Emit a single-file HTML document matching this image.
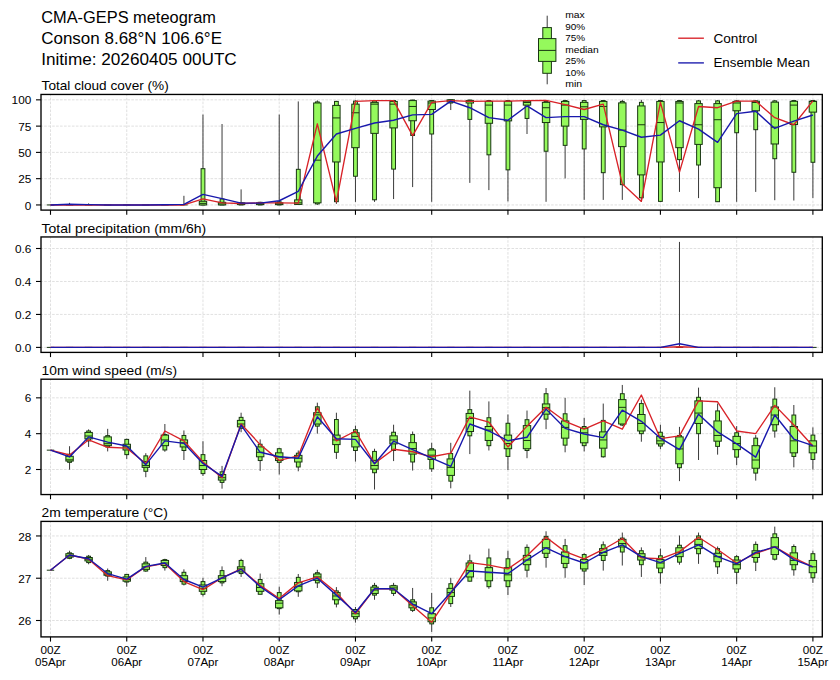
<!DOCTYPE html>
<html><head><meta charset="utf-8"><style>html,body{margin:0;padding:0;background:#fff;}svg{display:block;}</style></head><body><svg width="840" height="680" viewBox="0 0 840 680">
<rect width="840" height="680" fill="#ffffff"/>
<g font-family='"Liberation Sans", sans-serif' fill="#000">
<text x="41.20" y="22.90" font-size="16.22" text-anchor="start" textLength="174.79" lengthAdjust="spacingAndGlyphs">CMA-GEPS meteogram</text>
<text x="41.20" y="43.70" font-size="16.22" text-anchor="start" textLength="180.78" lengthAdjust="spacingAndGlyphs">Conson 8.68°N 106.6°E</text>
<text x="41.20" y="64.50" font-size="16.22" text-anchor="start" textLength="195.58" lengthAdjust="spacingAndGlyphs">Initime: 20260405 00UTC</text>
</g>
<g stroke="#d8d8d8" stroke-width="0.8" stroke-dasharray="2.6,1.36" stroke-dashoffset="0.75"><line x1="41.0" x2="822.3" y1="204.95" y2="204.95"/><line x1="41.0" x2="822.3" y1="178.67" y2="178.67"/><line x1="41.0" x2="822.3" y1="152.39" y2="152.39"/><line x1="41.0" x2="822.3" y1="126.12" y2="126.12"/><line x1="41.0" x2="822.3" y1="99.84" y2="99.84"/><line x1="50.50" x2="50.50" y1="94.45" y2="210.1"/><line x1="126.74" x2="126.74" y1="94.45" y2="210.1"/><line x1="202.98" x2="202.98" y1="94.45" y2="210.1"/><line x1="279.22" x2="279.22" y1="94.45" y2="210.1"/><line x1="355.46" x2="355.46" y1="94.45" y2="210.1"/><line x1="431.70" x2="431.70" y1="94.45" y2="210.1"/><line x1="507.94" x2="507.94" y1="94.45" y2="210.1"/><line x1="584.18" x2="584.18" y1="94.45" y2="210.1"/><line x1="660.42" x2="660.42" y1="94.45" y2="210.1"/><line x1="736.66" x2="736.66" y1="94.45" y2="210.1"/><line x1="812.90" x2="812.90" y1="94.45" y2="210.1"/></g>
<g><line x1="50.50" x2="50.50" y1="204.95" y2="204.95" stroke="#3a3a3a" stroke-width="1"/><rect x="48.60" y="204.95" width="3.8" height="0.00" fill="#95f95c" stroke="#183512" stroke-width="1"/><rect x="46.80" y="204.95" width="7.4" height="0.00" fill="#95f95c" stroke="#183512" stroke-width="1"/><line x1="46.80" x2="54.20" y1="204.95" y2="204.95" stroke="#183512" stroke-width="1"/><line x1="69.56" x2="69.56" y1="202.85" y2="204.95" stroke="#3a3a3a" stroke-width="1"/><rect x="67.66" y="204.95" width="3.8" height="0.00" fill="#95f95c" stroke="#183512" stroke-width="1"/><rect x="65.86" y="204.95" width="7.4" height="0.00" fill="#95f95c" stroke="#183512" stroke-width="1"/><line x1="65.86" x2="73.26" y1="204.95" y2="204.95" stroke="#183512" stroke-width="1"/><line x1="88.62" x2="88.62" y1="203.37" y2="204.95" stroke="#3a3a3a" stroke-width="1"/><rect x="86.72" y="204.95" width="3.8" height="0.00" fill="#95f95c" stroke="#183512" stroke-width="1"/><rect x="84.92" y="204.95" width="7.4" height="0.00" fill="#95f95c" stroke="#183512" stroke-width="1"/><line x1="84.92" x2="92.32" y1="204.95" y2="204.95" stroke="#183512" stroke-width="1"/><line x1="107.68" x2="107.68" y1="204.95" y2="204.95" stroke="#3a3a3a" stroke-width="1"/><rect x="105.78" y="204.95" width="3.8" height="0.00" fill="#95f95c" stroke="#183512" stroke-width="1"/><rect x="103.98" y="204.95" width="7.4" height="0.00" fill="#95f95c" stroke="#183512" stroke-width="1"/><line x1="103.98" x2="111.38" y1="204.95" y2="204.95" stroke="#183512" stroke-width="1"/><line x1="126.74" x2="126.74" y1="204.95" y2="204.95" stroke="#3a3a3a" stroke-width="1"/><rect x="124.84" y="204.95" width="3.8" height="0.00" fill="#95f95c" stroke="#183512" stroke-width="1"/><rect x="123.04" y="204.95" width="7.4" height="0.00" fill="#95f95c" stroke="#183512" stroke-width="1"/><line x1="123.04" x2="130.44" y1="204.95" y2="204.95" stroke="#183512" stroke-width="1"/><line x1="145.80" x2="145.80" y1="204.95" y2="204.95" stroke="#3a3a3a" stroke-width="1"/><rect x="143.90" y="204.95" width="3.8" height="0.00" fill="#95f95c" stroke="#183512" stroke-width="1"/><rect x="142.10" y="204.95" width="7.4" height="0.00" fill="#95f95c" stroke="#183512" stroke-width="1"/><line x1="142.10" x2="149.50" y1="204.95" y2="204.95" stroke="#183512" stroke-width="1"/><line x1="164.86" x2="164.86" y1="204.95" y2="204.95" stroke="#3a3a3a" stroke-width="1"/><rect x="162.96" y="204.95" width="3.8" height="0.00" fill="#95f95c" stroke="#183512" stroke-width="1"/><rect x="161.16" y="204.95" width="7.4" height="0.00" fill="#95f95c" stroke="#183512" stroke-width="1"/><line x1="161.16" x2="168.56" y1="204.95" y2="204.95" stroke="#183512" stroke-width="1"/><line x1="183.92" x2="183.92" y1="195.81" y2="204.95" stroke="#3a3a3a" stroke-width="1"/><rect x="182.02" y="204.95" width="3.8" height="0.00" fill="#95f95c" stroke="#183512" stroke-width="1"/><rect x="180.22" y="204.95" width="7.4" height="0.00" fill="#95f95c" stroke="#183512" stroke-width="1"/><line x1="180.22" x2="187.62" y1="204.95" y2="204.95" stroke="#183512" stroke-width="1"/><line x1="202.98" x2="202.98" y1="114.56" y2="204.95" stroke="#3a3a3a" stroke-width="1"/><rect x="201.08" y="168.69" width="3.8" height="36.26" fill="#95f95c" stroke="#183512" stroke-width="1"/><rect x="199.28" y="201.27" width="7.4" height="3.68" fill="#95f95c" stroke="#183512" stroke-width="1"/><line x1="199.28" x2="206.68" y1="203.37" y2="203.37" stroke="#183512" stroke-width="1"/><line x1="222.04" x2="222.04" y1="124.02" y2="204.95" stroke="#3a3a3a" stroke-width="1"/><rect x="220.14" y="198.96" width="3.8" height="5.99" fill="#95f95c" stroke="#183512" stroke-width="1"/><rect x="218.34" y="202.32" width="7.4" height="2.63" fill="#95f95c" stroke="#183512" stroke-width="1"/><line x1="218.34" x2="225.74" y1="203.90" y2="203.90" stroke="#183512" stroke-width="1"/><line x1="241.10" x2="241.10" y1="189.39" y2="204.95" stroke="#3a3a3a" stroke-width="1"/><rect x="239.20" y="202.85" width="3.8" height="2.10" fill="#95f95c" stroke="#183512" stroke-width="1"/><rect x="237.40" y="202.85" width="7.4" height="1.79" fill="#95f95c" stroke="#183512" stroke-width="1"/><line x1="237.40" x2="244.80" y1="203.90" y2="203.90" stroke="#183512" stroke-width="1"/><line x1="260.16" x2="260.16" y1="201.80" y2="204.95" stroke="#3a3a3a" stroke-width="1"/><rect x="258.26" y="202.32" width="3.8" height="2.63" fill="#95f95c" stroke="#183512" stroke-width="1"/><rect x="256.46" y="202.85" width="7.4" height="1.79" fill="#95f95c" stroke="#183512" stroke-width="1"/><line x1="256.46" x2="263.86" y1="203.90" y2="203.90" stroke="#183512" stroke-width="1"/><line x1="279.22" x2="279.22" y1="114.56" y2="204.95" stroke="#3a3a3a" stroke-width="1"/><rect x="277.32" y="201.80" width="3.8" height="3.15" fill="#95f95c" stroke="#183512" stroke-width="1"/><rect x="275.52" y="202.85" width="7.4" height="1.79" fill="#95f95c" stroke="#183512" stroke-width="1"/><line x1="275.52" x2="282.92" y1="203.90" y2="203.90" stroke="#183512" stroke-width="1"/><line x1="298.28" x2="298.28" y1="101.42" y2="204.95" stroke="#3a3a3a" stroke-width="1"/><rect x="296.38" y="169.32" width="3.8" height="35.11" fill="#95f95c" stroke="#183512" stroke-width="1"/><rect x="294.58" y="199.90" width="7.4" height="4.52" fill="#95f95c" stroke="#183512" stroke-width="1"/><line x1="294.58" x2="301.98" y1="202.85" y2="202.85" stroke="#183512" stroke-width="1"/><line x1="317.34" x2="317.34" y1="100.37" y2="204.95" stroke="#3a3a3a" stroke-width="1"/><rect x="315.44" y="101.94" width="3.8" height="101.96" fill="#95f95c" stroke="#183512" stroke-width="1"/><rect x="313.64" y="102.99" width="7.4" height="99.85" fill="#95f95c" stroke="#183512" stroke-width="1"/><line x1="313.64" x2="321.04" y1="160.17" y2="160.17" stroke="#183512" stroke-width="1"/><line x1="336.40" x2="336.40" y1="100.89" y2="203.90" stroke="#3a3a3a" stroke-width="1"/><rect x="334.50" y="101.42" width="3.8" height="100.27" fill="#95f95c" stroke="#183512" stroke-width="1"/><rect x="332.70" y="105.41" width="7.4" height="56.55" fill="#95f95c" stroke="#183512" stroke-width="1"/><line x1="332.70" x2="340.10" y1="117.92" y2="117.92" stroke="#183512" stroke-width="1"/><line x1="355.46" x2="355.46" y1="100.37" y2="201.90" stroke="#3a3a3a" stroke-width="1"/><rect x="353.56" y="101.10" width="3.8" height="75.15" fill="#95f95c" stroke="#183512" stroke-width="1"/><rect x="351.76" y="104.15" width="7.4" height="43.52" fill="#95f95c" stroke="#183512" stroke-width="1"/><line x1="351.76" x2="359.16" y1="112.77" y2="112.77" stroke="#183512" stroke-width="1"/><line x1="374.52" x2="374.52" y1="100.37" y2="201.90" stroke="#3a3a3a" stroke-width="1"/><rect x="372.62" y="100.89" width="3.8" height="98.91" fill="#95f95c" stroke="#183512" stroke-width="1"/><rect x="370.82" y="102.36" width="7.4" height="31.01" fill="#95f95c" stroke="#183512" stroke-width="1"/><line x1="370.82" x2="378.22" y1="104.15" y2="104.15" stroke="#183512" stroke-width="1"/><line x1="393.58" x2="393.58" y1="100.37" y2="199.06" stroke="#3a3a3a" stroke-width="1"/><rect x="391.68" y="100.58" width="3.8" height="68.53" fill="#95f95c" stroke="#183512" stroke-width="1"/><rect x="389.88" y="101.42" width="7.4" height="26.49" fill="#95f95c" stroke="#183512" stroke-width="1"/><line x1="389.88" x2="397.28" y1="104.15" y2="104.15" stroke="#183512" stroke-width="1"/><line x1="412.64" x2="412.64" y1="99.84" y2="187.08" stroke="#3a3a3a" stroke-width="1"/><rect x="410.74" y="100.05" width="3.8" height="35.42" fill="#95f95c" stroke="#183512" stroke-width="1"/><rect x="408.94" y="100.58" width="7.4" height="20.18" fill="#95f95c" stroke="#183512" stroke-width="1"/><line x1="408.94" x2="416.34" y1="106.46" y2="106.46" stroke="#183512" stroke-width="1"/><line x1="431.70" x2="431.70" y1="100.37" y2="201.80" stroke="#3a3a3a" stroke-width="1"/><rect x="429.80" y="100.58" width="3.8" height="33.42" fill="#95f95c" stroke="#183512" stroke-width="1"/><rect x="428.00" y="101.10" width="7.4" height="8.41" fill="#95f95c" stroke="#183512" stroke-width="1"/><line x1="428.00" x2="435.40" y1="102.99" y2="102.99" stroke="#183512" stroke-width="1"/><line x1="450.76" x2="450.76" y1="99.84" y2="110.04" stroke="#3a3a3a" stroke-width="1"/><rect x="448.86" y="99.84" width="3.8" height="3.15" fill="#95f95c" stroke="#183512" stroke-width="1"/><rect x="447.06" y="99.84" width="7.4" height="2.10" fill="#95f95c" stroke="#183512" stroke-width="1"/><line x1="447.06" x2="454.46" y1="100.37" y2="100.37" stroke="#183512" stroke-width="1"/><line x1="469.82" x2="469.82" y1="99.84" y2="182.88" stroke="#3a3a3a" stroke-width="1"/><rect x="467.92" y="100.05" width="3.8" height="19.34" fill="#95f95c" stroke="#183512" stroke-width="1"/><rect x="466.12" y="100.58" width="7.4" height="2.42" fill="#95f95c" stroke="#183512" stroke-width="1"/><line x1="466.12" x2="473.52" y1="101.42" y2="101.42" stroke="#183512" stroke-width="1"/><line x1="488.88" x2="488.88" y1="100.05" y2="190.13" stroke="#3a3a3a" stroke-width="1"/><rect x="486.98" y="100.58" width="3.8" height="54.24" fill="#95f95c" stroke="#183512" stroke-width="1"/><rect x="485.18" y="101.42" width="7.4" height="21.86" fill="#95f95c" stroke="#183512" stroke-width="1"/><line x1="485.18" x2="492.58" y1="105.10" y2="105.10" stroke="#183512" stroke-width="1"/><line x1="507.94" x2="507.94" y1="100.05" y2="201.38" stroke="#3a3a3a" stroke-width="1"/><rect x="506.04" y="100.58" width="3.8" height="69.27" fill="#95f95c" stroke="#183512" stroke-width="1"/><rect x="504.24" y="101.42" width="7.4" height="19.45" fill="#95f95c" stroke="#183512" stroke-width="1"/><line x1="504.24" x2="511.64" y1="105.10" y2="105.10" stroke="#183512" stroke-width="1"/><line x1="527.00" x2="527.00" y1="100.05" y2="134.00" stroke="#3a3a3a" stroke-width="1"/><rect x="525.10" y="100.58" width="3.8" height="17.87" fill="#95f95c" stroke="#183512" stroke-width="1"/><rect x="523.30" y="101.10" width="7.4" height="3.99" fill="#95f95c" stroke="#183512" stroke-width="1"/><line x1="523.30" x2="530.70" y1="102.47" y2="102.47" stroke="#183512" stroke-width="1"/><line x1="546.06" x2="546.06" y1="100.37" y2="201.80" stroke="#3a3a3a" stroke-width="1"/><rect x="544.16" y="101.42" width="3.8" height="49.82" fill="#95f95c" stroke="#183512" stroke-width="1"/><rect x="542.36" y="102.36" width="7.4" height="20.18" fill="#95f95c" stroke="#183512" stroke-width="1"/><line x1="542.36" x2="549.76" y1="107.72" y2="107.72" stroke="#183512" stroke-width="1"/><line x1="565.12" x2="565.12" y1="99.84" y2="178.46" stroke="#3a3a3a" stroke-width="1"/><rect x="563.22" y="100.58" width="3.8" height="44.78" fill="#95f95c" stroke="#183512" stroke-width="1"/><rect x="561.42" y="101.42" width="7.4" height="24.70" fill="#95f95c" stroke="#183512" stroke-width="1"/><line x1="561.42" x2="568.82" y1="105.10" y2="105.10" stroke="#183512" stroke-width="1"/><line x1="584.18" x2="584.18" y1="100.05" y2="199.90" stroke="#3a3a3a" stroke-width="1"/><rect x="582.28" y="100.58" width="3.8" height="48.35" fill="#95f95c" stroke="#183512" stroke-width="1"/><rect x="580.48" y="102.36" width="7.4" height="17.03" fill="#95f95c" stroke="#183512" stroke-width="1"/><line x1="580.48" x2="587.88" y1="106.78" y2="106.78" stroke="#183512" stroke-width="1"/><line x1="603.24" x2="603.24" y1="100.05" y2="199.90" stroke="#3a3a3a" stroke-width="1"/><rect x="601.34" y="100.58" width="3.8" height="72.11" fill="#95f95c" stroke="#183512" stroke-width="1"/><rect x="599.54" y="101.42" width="7.4" height="25.44" fill="#95f95c" stroke="#183512" stroke-width="1"/><line x1="599.54" x2="606.94" y1="106.46" y2="106.46" stroke="#183512" stroke-width="1"/><line x1="622.30" x2="622.30" y1="99.84" y2="199.90" stroke="#3a3a3a" stroke-width="1"/><rect x="620.40" y="101.42" width="3.8" height="83.25" fill="#95f95c" stroke="#183512" stroke-width="1"/><rect x="618.60" y="102.89" width="7.4" height="43.73" fill="#95f95c" stroke="#183512" stroke-width="1"/><line x1="618.60" x2="626.00" y1="130.11" y2="130.11" stroke="#183512" stroke-width="1"/><line x1="641.36" x2="641.36" y1="99.84" y2="201.80" stroke="#3a3a3a" stroke-width="1"/><rect x="639.46" y="102.36" width="3.8" height="95.44" fill="#95f95c" stroke="#183512" stroke-width="1"/><rect x="637.66" y="105.94" width="7.4" height="68.95" fill="#95f95c" stroke="#183512" stroke-width="1"/><line x1="637.66" x2="645.06" y1="124.75" y2="124.75" stroke="#183512" stroke-width="1"/><line x1="660.42" x2="660.42" y1="100.05" y2="201.80" stroke="#3a3a3a" stroke-width="1"/><rect x="658.52" y="100.58" width="3.8" height="100.80" fill="#95f95c" stroke="#183512" stroke-width="1"/><rect x="656.72" y="101.42" width="7.4" height="60.54" fill="#95f95c" stroke="#183512" stroke-width="1"/><line x1="656.72" x2="664.12" y1="122.54" y2="122.54" stroke="#183512" stroke-width="1"/><line x1="679.48" x2="679.48" y1="100.05" y2="191.92" stroke="#3a3a3a" stroke-width="1"/><rect x="677.58" y="100.58" width="3.8" height="59.07" fill="#95f95c" stroke="#183512" stroke-width="1"/><rect x="675.78" y="101.42" width="7.4" height="46.25" fill="#95f95c" stroke="#183512" stroke-width="1"/><line x1="675.78" x2="683.18" y1="102.99" y2="102.99" stroke="#183512" stroke-width="1"/><line x1="698.54" x2="698.54" y1="100.05" y2="198.12" stroke="#3a3a3a" stroke-width="1"/><rect x="696.64" y="100.89" width="3.8" height="64.12" fill="#95f95c" stroke="#183512" stroke-width="1"/><rect x="694.84" y="103.62" width="7.4" height="40.78" fill="#95f95c" stroke="#183512" stroke-width="1"/><line x1="694.84" x2="702.24" y1="124.75" y2="124.75" stroke="#183512" stroke-width="1"/><line x1="717.60" x2="717.60" y1="100.05" y2="201.80" stroke="#3a3a3a" stroke-width="1"/><rect x="715.70" y="100.89" width="3.8" height="100.80" fill="#95f95c" stroke="#183512" stroke-width="1"/><rect x="713.90" y="103.62" width="7.4" height="84.09" fill="#95f95c" stroke="#183512" stroke-width="1"/><line x1="713.90" x2="721.30" y1="119.71" y2="119.71" stroke="#183512" stroke-width="1"/><line x1="736.66" x2="736.66" y1="100.05" y2="201.80" stroke="#3a3a3a" stroke-width="1"/><rect x="734.76" y="100.89" width="3.8" height="31.85" fill="#95f95c" stroke="#183512" stroke-width="1"/><rect x="732.96" y="101.42" width="7.4" height="9.35" fill="#95f95c" stroke="#183512" stroke-width="1"/><line x1="732.96" x2="740.36" y1="102.99" y2="102.99" stroke="#183512" stroke-width="1"/><line x1="755.72" x2="755.72" y1="100.05" y2="191.92" stroke="#3a3a3a" stroke-width="1"/><rect x="753.82" y="100.89" width="3.8" height="28.80" fill="#95f95c" stroke="#183512" stroke-width="1"/><rect x="752.02" y="101.21" width="7.4" height="9.57" fill="#95f95c" stroke="#183512" stroke-width="1"/><line x1="752.02" x2="759.42" y1="102.47" y2="102.47" stroke="#183512" stroke-width="1"/><line x1="774.78" x2="774.78" y1="100.05" y2="200.22" stroke="#3a3a3a" stroke-width="1"/><rect x="772.88" y="100.89" width="3.8" height="57.81" fill="#95f95c" stroke="#183512" stroke-width="1"/><rect x="771.08" y="102.15" width="7.4" height="41.83" fill="#95f95c" stroke="#183512" stroke-width="1"/><line x1="771.08" x2="778.48" y1="127.17" y2="127.17" stroke="#183512" stroke-width="1"/><line x1="793.84" x2="793.84" y1="100.05" y2="200.54" stroke="#3a3a3a" stroke-width="1"/><rect x="791.94" y="100.58" width="3.8" height="71.69" fill="#95f95c" stroke="#183512" stroke-width="1"/><rect x="790.14" y="101.31" width="7.4" height="23.23" fill="#95f95c" stroke="#183512" stroke-width="1"/><line x1="790.14" x2="797.54" y1="105.10" y2="105.10" stroke="#183512" stroke-width="1"/><line x1="812.90" x2="812.90" y1="100.05" y2="197.91" stroke="#3a3a3a" stroke-width="1"/><rect x="811.00" y="100.58" width="3.8" height="61.70" fill="#95f95c" stroke="#183512" stroke-width="1"/><rect x="809.20" y="101.21" width="7.4" height="10.93" fill="#95f95c" stroke="#183512" stroke-width="1"/><line x1="809.20" x2="816.60" y1="101.52" y2="101.52" stroke="#183512" stroke-width="1"/></g>
<polyline points="50.50,204.95 69.56,204.95 88.62,204.95 107.68,204.95 126.74,204.95 145.80,204.95 164.86,204.95 183.92,204.95 202.98,198.96 222.04,202.85 241.10,203.48 260.16,202.85 279.22,202.85 298.28,203.16 317.34,123.81 336.40,201.80 355.46,101.42 374.52,100.58 393.58,100.58 412.64,135.58 431.70,102.36 450.76,100.58 469.82,101.42 488.88,101.10 507.94,101.10 527.00,100.58 546.06,100.37 565.12,104.68 584.18,109.51 603.24,104.15 622.30,183.82 641.36,201.38 660.42,102.36 679.48,172.16 698.54,106.46 717.60,107.72 736.66,101.10 755.72,101.10 774.78,117.71 793.84,124.75 812.90,100.89" fill="none" stroke="#d82228" stroke-width="1.35" stroke-linejoin="round"/>
<polyline points="50.50,204.95 69.56,204.32 88.62,204.63 107.68,204.95 126.74,204.95 145.80,204.95 164.86,204.74 183.92,204.42 202.98,194.44 222.04,198.64 241.10,203.16 260.16,203.16 279.22,200.75 298.28,191.29 317.34,156.07 336.40,134.00 355.46,128.32 374.52,122.96 393.58,120.23 412.64,114.87 431.70,114.35 450.76,101.10 469.82,107.72 488.88,117.60 507.94,120.23 527.00,105.94 546.06,117.60 565.12,116.66 584.18,116.66 603.24,124.75 622.30,130.11 641.36,137.26 660.42,135.16 679.48,120.76 698.54,129.17 717.60,142.30 736.66,113.61 755.72,111.30 774.78,128.43 793.84,121.18 812.90,114.98" fill="none" stroke="#1818ac" stroke-width="1.4" stroke-linejoin="round"/>
<rect x="41.0" y="94.45" width="781.30" height="115.65" fill="none" stroke="#000" stroke-width="1.35"/>
<g stroke="#000" stroke-width="1.1"><line x1="36.0" x2="41.0" y1="204.95" y2="204.95"/><line x1="36.0" x2="41.0" y1="178.67" y2="178.67"/><line x1="36.0" x2="41.0" y1="152.39" y2="152.39"/><line x1="36.0" x2="41.0" y1="126.12" y2="126.12"/><line x1="36.0" x2="41.0" y1="99.84" y2="99.84"/><line x1="50.50" x2="50.50" y1="210.1" y2="214.79999999999998"/><line x1="126.74" x2="126.74" y1="210.1" y2="214.79999999999998"/><line x1="202.98" x2="202.98" y1="210.1" y2="214.79999999999998"/><line x1="279.22" x2="279.22" y1="210.1" y2="214.79999999999998"/><line x1="355.46" x2="355.46" y1="210.1" y2="214.79999999999998"/><line x1="431.70" x2="431.70" y1="210.1" y2="214.79999999999998"/><line x1="507.94" x2="507.94" y1="210.1" y2="214.79999999999998"/><line x1="584.18" x2="584.18" y1="210.1" y2="214.79999999999998"/><line x1="660.42" x2="660.42" y1="210.1" y2="214.79999999999998"/><line x1="736.66" x2="736.66" y1="210.1" y2="214.79999999999998"/><line x1="812.90" x2="812.90" y1="210.1" y2="214.79999999999998"/></g>
<g font-family='"Liberation Sans", sans-serif' fill="#000"><text x="31.30" y="209.55" font-size="10.92" text-anchor="end" textLength="6.55" lengthAdjust="spacingAndGlyphs">0</text><text x="31.30" y="183.27" font-size="10.92" text-anchor="end" textLength="13.11" lengthAdjust="spacingAndGlyphs">25</text><text x="31.30" y="156.99" font-size="10.92" text-anchor="end" textLength="13.11" lengthAdjust="spacingAndGlyphs">50</text><text x="31.30" y="130.72" font-size="10.92" text-anchor="end" textLength="13.11" lengthAdjust="spacingAndGlyphs">75</text><text x="31.30" y="104.44" font-size="10.92" text-anchor="end" textLength="19.66" lengthAdjust="spacingAndGlyphs">100</text></g>
<text x="41.60" y="90.10" font-size="12.83" text-anchor="start" textLength="127.14" lengthAdjust="spacingAndGlyphs" font-family='"Liberation Sans", sans-serif' fill="#000">Total cloud cover (%)</text>
<g stroke="#d8d8d8" stroke-width="0.8" stroke-dasharray="2.6,1.36" stroke-dashoffset="0.75"><line x1="41.0" x2="822.3" y1="347.40" y2="347.40"/><line x1="41.0" x2="822.3" y1="314.43" y2="314.43"/><line x1="41.0" x2="822.3" y1="281.47" y2="281.47"/><line x1="41.0" x2="822.3" y1="248.50" y2="248.50"/><line x1="50.50" x2="50.50" y1="236.95" y2="352.4"/><line x1="126.74" x2="126.74" y1="236.95" y2="352.4"/><line x1="202.98" x2="202.98" y1="236.95" y2="352.4"/><line x1="279.22" x2="279.22" y1="236.95" y2="352.4"/><line x1="355.46" x2="355.46" y1="236.95" y2="352.4"/><line x1="431.70" x2="431.70" y1="236.95" y2="352.4"/><line x1="507.94" x2="507.94" y1="236.95" y2="352.4"/><line x1="584.18" x2="584.18" y1="236.95" y2="352.4"/><line x1="660.42" x2="660.42" y1="236.95" y2="352.4"/><line x1="736.66" x2="736.66" y1="236.95" y2="352.4"/><line x1="812.90" x2="812.90" y1="236.95" y2="352.4"/></g>
<g><line x1="50.50" x2="50.50" y1="347.40" y2="347.40" stroke="#3a3a3a" stroke-width="1"/><rect x="48.60" y="347.40" width="3.8" height="0.00" fill="#95f95c" stroke="#183512" stroke-width="1"/><rect x="46.80" y="347.40" width="7.4" height="0.00" fill="#95f95c" stroke="#183512" stroke-width="1"/><line x1="46.80" x2="54.20" y1="347.40" y2="347.40" stroke="#183512" stroke-width="1"/><line x1="69.56" x2="69.56" y1="347.40" y2="347.40" stroke="#3a3a3a" stroke-width="1"/><rect x="67.66" y="347.40" width="3.8" height="0.00" fill="#95f95c" stroke="#183512" stroke-width="1"/><rect x="65.86" y="347.40" width="7.4" height="0.00" fill="#95f95c" stroke="#183512" stroke-width="1"/><line x1="65.86" x2="73.26" y1="347.40" y2="347.40" stroke="#183512" stroke-width="1"/><line x1="88.62" x2="88.62" y1="347.40" y2="347.40" stroke="#3a3a3a" stroke-width="1"/><rect x="86.72" y="347.40" width="3.8" height="0.00" fill="#95f95c" stroke="#183512" stroke-width="1"/><rect x="84.92" y="347.40" width="7.4" height="0.00" fill="#95f95c" stroke="#183512" stroke-width="1"/><line x1="84.92" x2="92.32" y1="347.40" y2="347.40" stroke="#183512" stroke-width="1"/><line x1="107.68" x2="107.68" y1="347.40" y2="347.40" stroke="#3a3a3a" stroke-width="1"/><rect x="105.78" y="347.40" width="3.8" height="0.00" fill="#95f95c" stroke="#183512" stroke-width="1"/><rect x="103.98" y="347.40" width="7.4" height="0.00" fill="#95f95c" stroke="#183512" stroke-width="1"/><line x1="103.98" x2="111.38" y1="347.40" y2="347.40" stroke="#183512" stroke-width="1"/><line x1="126.74" x2="126.74" y1="347.40" y2="347.40" stroke="#3a3a3a" stroke-width="1"/><rect x="124.84" y="347.40" width="3.8" height="0.00" fill="#95f95c" stroke="#183512" stroke-width="1"/><rect x="123.04" y="347.40" width="7.4" height="0.00" fill="#95f95c" stroke="#183512" stroke-width="1"/><line x1="123.04" x2="130.44" y1="347.40" y2="347.40" stroke="#183512" stroke-width="1"/><line x1="145.80" x2="145.80" y1="347.40" y2="347.40" stroke="#3a3a3a" stroke-width="1"/><rect x="143.90" y="347.40" width="3.8" height="0.00" fill="#95f95c" stroke="#183512" stroke-width="1"/><rect x="142.10" y="347.40" width="7.4" height="0.00" fill="#95f95c" stroke="#183512" stroke-width="1"/><line x1="142.10" x2="149.50" y1="347.40" y2="347.40" stroke="#183512" stroke-width="1"/><line x1="164.86" x2="164.86" y1="347.40" y2="347.40" stroke="#3a3a3a" stroke-width="1"/><rect x="162.96" y="347.40" width="3.8" height="0.00" fill="#95f95c" stroke="#183512" stroke-width="1"/><rect x="161.16" y="347.40" width="7.4" height="0.00" fill="#95f95c" stroke="#183512" stroke-width="1"/><line x1="161.16" x2="168.56" y1="347.40" y2="347.40" stroke="#183512" stroke-width="1"/><line x1="183.92" x2="183.92" y1="347.40" y2="347.40" stroke="#3a3a3a" stroke-width="1"/><rect x="182.02" y="347.40" width="3.8" height="0.00" fill="#95f95c" stroke="#183512" stroke-width="1"/><rect x="180.22" y="347.40" width="7.4" height="0.00" fill="#95f95c" stroke="#183512" stroke-width="1"/><line x1="180.22" x2="187.62" y1="347.40" y2="347.40" stroke="#183512" stroke-width="1"/><line x1="202.98" x2="202.98" y1="347.40" y2="347.40" stroke="#3a3a3a" stroke-width="1"/><rect x="201.08" y="347.40" width="3.8" height="0.00" fill="#95f95c" stroke="#183512" stroke-width="1"/><rect x="199.28" y="347.40" width="7.4" height="0.00" fill="#95f95c" stroke="#183512" stroke-width="1"/><line x1="199.28" x2="206.68" y1="347.40" y2="347.40" stroke="#183512" stroke-width="1"/><line x1="222.04" x2="222.04" y1="347.40" y2="347.40" stroke="#3a3a3a" stroke-width="1"/><rect x="220.14" y="347.40" width="3.8" height="0.00" fill="#95f95c" stroke="#183512" stroke-width="1"/><rect x="218.34" y="347.40" width="7.4" height="0.00" fill="#95f95c" stroke="#183512" stroke-width="1"/><line x1="218.34" x2="225.74" y1="347.40" y2="347.40" stroke="#183512" stroke-width="1"/><line x1="241.10" x2="241.10" y1="347.40" y2="347.40" stroke="#3a3a3a" stroke-width="1"/><rect x="239.20" y="347.40" width="3.8" height="0.00" fill="#95f95c" stroke="#183512" stroke-width="1"/><rect x="237.40" y="347.40" width="7.4" height="0.00" fill="#95f95c" stroke="#183512" stroke-width="1"/><line x1="237.40" x2="244.80" y1="347.40" y2="347.40" stroke="#183512" stroke-width="1"/><line x1="260.16" x2="260.16" y1="347.40" y2="347.40" stroke="#3a3a3a" stroke-width="1"/><rect x="258.26" y="347.40" width="3.8" height="0.00" fill="#95f95c" stroke="#183512" stroke-width="1"/><rect x="256.46" y="347.40" width="7.4" height="0.00" fill="#95f95c" stroke="#183512" stroke-width="1"/><line x1="256.46" x2="263.86" y1="347.40" y2="347.40" stroke="#183512" stroke-width="1"/><line x1="279.22" x2="279.22" y1="347.40" y2="347.40" stroke="#3a3a3a" stroke-width="1"/><rect x="277.32" y="347.40" width="3.8" height="0.00" fill="#95f95c" stroke="#183512" stroke-width="1"/><rect x="275.52" y="347.40" width="7.4" height="0.00" fill="#95f95c" stroke="#183512" stroke-width="1"/><line x1="275.52" x2="282.92" y1="347.40" y2="347.40" stroke="#183512" stroke-width="1"/><line x1="298.28" x2="298.28" y1="347.40" y2="347.40" stroke="#3a3a3a" stroke-width="1"/><rect x="296.38" y="347.40" width="3.8" height="0.00" fill="#95f95c" stroke="#183512" stroke-width="1"/><rect x="294.58" y="347.40" width="7.4" height="0.00" fill="#95f95c" stroke="#183512" stroke-width="1"/><line x1="294.58" x2="301.98" y1="347.40" y2="347.40" stroke="#183512" stroke-width="1"/><line x1="317.34" x2="317.34" y1="347.40" y2="347.40" stroke="#3a3a3a" stroke-width="1"/><rect x="315.44" y="347.40" width="3.8" height="0.00" fill="#95f95c" stroke="#183512" stroke-width="1"/><rect x="313.64" y="347.40" width="7.4" height="0.00" fill="#95f95c" stroke="#183512" stroke-width="1"/><line x1="313.64" x2="321.04" y1="347.40" y2="347.40" stroke="#183512" stroke-width="1"/><line x1="336.40" x2="336.40" y1="347.40" y2="347.40" stroke="#3a3a3a" stroke-width="1"/><rect x="334.50" y="347.40" width="3.8" height="0.00" fill="#95f95c" stroke="#183512" stroke-width="1"/><rect x="332.70" y="347.40" width="7.4" height="0.00" fill="#95f95c" stroke="#183512" stroke-width="1"/><line x1="332.70" x2="340.10" y1="347.40" y2="347.40" stroke="#183512" stroke-width="1"/><line x1="355.46" x2="355.46" y1="347.40" y2="347.40" stroke="#3a3a3a" stroke-width="1"/><rect x="353.56" y="347.40" width="3.8" height="0.00" fill="#95f95c" stroke="#183512" stroke-width="1"/><rect x="351.76" y="347.40" width="7.4" height="0.00" fill="#95f95c" stroke="#183512" stroke-width="1"/><line x1="351.76" x2="359.16" y1="347.40" y2="347.40" stroke="#183512" stroke-width="1"/><line x1="374.52" x2="374.52" y1="347.40" y2="347.40" stroke="#3a3a3a" stroke-width="1"/><rect x="372.62" y="347.40" width="3.8" height="0.00" fill="#95f95c" stroke="#183512" stroke-width="1"/><rect x="370.82" y="347.40" width="7.4" height="0.00" fill="#95f95c" stroke="#183512" stroke-width="1"/><line x1="370.82" x2="378.22" y1="347.40" y2="347.40" stroke="#183512" stroke-width="1"/><line x1="393.58" x2="393.58" y1="347.40" y2="347.40" stroke="#3a3a3a" stroke-width="1"/><rect x="391.68" y="347.40" width="3.8" height="0.00" fill="#95f95c" stroke="#183512" stroke-width="1"/><rect x="389.88" y="347.40" width="7.4" height="0.00" fill="#95f95c" stroke="#183512" stroke-width="1"/><line x1="389.88" x2="397.28" y1="347.40" y2="347.40" stroke="#183512" stroke-width="1"/><line x1="412.64" x2="412.64" y1="347.40" y2="347.40" stroke="#3a3a3a" stroke-width="1"/><rect x="410.74" y="347.40" width="3.8" height="0.00" fill="#95f95c" stroke="#183512" stroke-width="1"/><rect x="408.94" y="347.40" width="7.4" height="0.00" fill="#95f95c" stroke="#183512" stroke-width="1"/><line x1="408.94" x2="416.34" y1="347.40" y2="347.40" stroke="#183512" stroke-width="1"/><line x1="431.70" x2="431.70" y1="347.40" y2="347.40" stroke="#3a3a3a" stroke-width="1"/><rect x="429.80" y="347.40" width="3.8" height="0.00" fill="#95f95c" stroke="#183512" stroke-width="1"/><rect x="428.00" y="347.40" width="7.4" height="0.00" fill="#95f95c" stroke="#183512" stroke-width="1"/><line x1="428.00" x2="435.40" y1="347.40" y2="347.40" stroke="#183512" stroke-width="1"/><line x1="450.76" x2="450.76" y1="347.40" y2="347.40" stroke="#3a3a3a" stroke-width="1"/><rect x="448.86" y="347.40" width="3.8" height="0.00" fill="#95f95c" stroke="#183512" stroke-width="1"/><rect x="447.06" y="347.40" width="7.4" height="0.00" fill="#95f95c" stroke="#183512" stroke-width="1"/><line x1="447.06" x2="454.46" y1="347.40" y2="347.40" stroke="#183512" stroke-width="1"/><line x1="469.82" x2="469.82" y1="347.40" y2="347.40" stroke="#3a3a3a" stroke-width="1"/><rect x="467.92" y="347.40" width="3.8" height="0.00" fill="#95f95c" stroke="#183512" stroke-width="1"/><rect x="466.12" y="347.40" width="7.4" height="0.00" fill="#95f95c" stroke="#183512" stroke-width="1"/><line x1="466.12" x2="473.52" y1="347.40" y2="347.40" stroke="#183512" stroke-width="1"/><line x1="488.88" x2="488.88" y1="347.40" y2="347.40" stroke="#3a3a3a" stroke-width="1"/><rect x="486.98" y="347.40" width="3.8" height="0.00" fill="#95f95c" stroke="#183512" stroke-width="1"/><rect x="485.18" y="347.40" width="7.4" height="0.00" fill="#95f95c" stroke="#183512" stroke-width="1"/><line x1="485.18" x2="492.58" y1="347.40" y2="347.40" stroke="#183512" stroke-width="1"/><line x1="507.94" x2="507.94" y1="347.40" y2="347.40" stroke="#3a3a3a" stroke-width="1"/><rect x="506.04" y="347.40" width="3.8" height="0.00" fill="#95f95c" stroke="#183512" stroke-width="1"/><rect x="504.24" y="347.40" width="7.4" height="0.00" fill="#95f95c" stroke="#183512" stroke-width="1"/><line x1="504.24" x2="511.64" y1="347.40" y2="347.40" stroke="#183512" stroke-width="1"/><line x1="527.00" x2="527.00" y1="347.40" y2="347.40" stroke="#3a3a3a" stroke-width="1"/><rect x="525.10" y="347.40" width="3.8" height="0.00" fill="#95f95c" stroke="#183512" stroke-width="1"/><rect x="523.30" y="347.40" width="7.4" height="0.00" fill="#95f95c" stroke="#183512" stroke-width="1"/><line x1="523.30" x2="530.70" y1="347.40" y2="347.40" stroke="#183512" stroke-width="1"/><line x1="546.06" x2="546.06" y1="347.40" y2="347.40" stroke="#3a3a3a" stroke-width="1"/><rect x="544.16" y="347.40" width="3.8" height="0.00" fill="#95f95c" stroke="#183512" stroke-width="1"/><rect x="542.36" y="347.40" width="7.4" height="0.00" fill="#95f95c" stroke="#183512" stroke-width="1"/><line x1="542.36" x2="549.76" y1="347.40" y2="347.40" stroke="#183512" stroke-width="1"/><line x1="565.12" x2="565.12" y1="347.40" y2="347.40" stroke="#3a3a3a" stroke-width="1"/><rect x="563.22" y="347.40" width="3.8" height="0.00" fill="#95f95c" stroke="#183512" stroke-width="1"/><rect x="561.42" y="347.40" width="7.4" height="0.00" fill="#95f95c" stroke="#183512" stroke-width="1"/><line x1="561.42" x2="568.82" y1="347.40" y2="347.40" stroke="#183512" stroke-width="1"/><line x1="584.18" x2="584.18" y1="347.40" y2="347.40" stroke="#3a3a3a" stroke-width="1"/><rect x="582.28" y="347.40" width="3.8" height="0.00" fill="#95f95c" stroke="#183512" stroke-width="1"/><rect x="580.48" y="347.40" width="7.4" height="0.00" fill="#95f95c" stroke="#183512" stroke-width="1"/><line x1="580.48" x2="587.88" y1="347.40" y2="347.40" stroke="#183512" stroke-width="1"/><line x1="603.24" x2="603.24" y1="347.40" y2="347.40" stroke="#3a3a3a" stroke-width="1"/><rect x="601.34" y="347.40" width="3.8" height="0.00" fill="#95f95c" stroke="#183512" stroke-width="1"/><rect x="599.54" y="347.40" width="7.4" height="0.00" fill="#95f95c" stroke="#183512" stroke-width="1"/><line x1="599.54" x2="606.94" y1="347.40" y2="347.40" stroke="#183512" stroke-width="1"/><line x1="622.30" x2="622.30" y1="347.40" y2="347.40" stroke="#3a3a3a" stroke-width="1"/><rect x="620.40" y="347.40" width="3.8" height="0.00" fill="#95f95c" stroke="#183512" stroke-width="1"/><rect x="618.60" y="347.40" width="7.4" height="0.00" fill="#95f95c" stroke="#183512" stroke-width="1"/><line x1="618.60" x2="626.00" y1="347.40" y2="347.40" stroke="#183512" stroke-width="1"/><line x1="641.36" x2="641.36" y1="347.40" y2="347.40" stroke="#3a3a3a" stroke-width="1"/><rect x="639.46" y="347.40" width="3.8" height="0.00" fill="#95f95c" stroke="#183512" stroke-width="1"/><rect x="637.66" y="347.40" width="7.4" height="0.00" fill="#95f95c" stroke="#183512" stroke-width="1"/><line x1="637.66" x2="645.06" y1="347.40" y2="347.40" stroke="#183512" stroke-width="1"/><line x1="660.42" x2="660.42" y1="347.40" y2="347.40" stroke="#3a3a3a" stroke-width="1"/><rect x="658.52" y="347.40" width="3.8" height="0.00" fill="#95f95c" stroke="#183512" stroke-width="1"/><rect x="656.72" y="347.40" width="7.4" height="0.00" fill="#95f95c" stroke="#183512" stroke-width="1"/><line x1="656.72" x2="664.12" y1="347.40" y2="347.40" stroke="#183512" stroke-width="1"/><line x1="679.48" x2="679.48" y1="241.91" y2="347.40" stroke="#3a3a3a" stroke-width="1"/><rect x="677.58" y="347.40" width="3.8" height="0.00" fill="#95f95c" stroke="#183512" stroke-width="1"/><rect x="675.78" y="347.40" width="7.4" height="0.00" fill="#95f95c" stroke="#183512" stroke-width="1"/><line x1="675.78" x2="683.18" y1="347.40" y2="347.40" stroke="#183512" stroke-width="1"/><line x1="698.54" x2="698.54" y1="347.40" y2="347.40" stroke="#3a3a3a" stroke-width="1"/><rect x="696.64" y="347.40" width="3.8" height="0.00" fill="#95f95c" stroke="#183512" stroke-width="1"/><rect x="694.84" y="347.40" width="7.4" height="0.00" fill="#95f95c" stroke="#183512" stroke-width="1"/><line x1="694.84" x2="702.24" y1="347.40" y2="347.40" stroke="#183512" stroke-width="1"/><line x1="717.60" x2="717.60" y1="347.40" y2="347.40" stroke="#3a3a3a" stroke-width="1"/><rect x="715.70" y="347.40" width="3.8" height="0.00" fill="#95f95c" stroke="#183512" stroke-width="1"/><rect x="713.90" y="347.40" width="7.4" height="0.00" fill="#95f95c" stroke="#183512" stroke-width="1"/><line x1="713.90" x2="721.30" y1="347.40" y2="347.40" stroke="#183512" stroke-width="1"/><line x1="736.66" x2="736.66" y1="347.40" y2="347.40" stroke="#3a3a3a" stroke-width="1"/><rect x="734.76" y="347.40" width="3.8" height="0.00" fill="#95f95c" stroke="#183512" stroke-width="1"/><rect x="732.96" y="347.40" width="7.4" height="0.00" fill="#95f95c" stroke="#183512" stroke-width="1"/><line x1="732.96" x2="740.36" y1="347.40" y2="347.40" stroke="#183512" stroke-width="1"/><line x1="755.72" x2="755.72" y1="347.40" y2="347.40" stroke="#3a3a3a" stroke-width="1"/><rect x="753.82" y="347.40" width="3.8" height="0.00" fill="#95f95c" stroke="#183512" stroke-width="1"/><rect x="752.02" y="347.40" width="7.4" height="0.00" fill="#95f95c" stroke="#183512" stroke-width="1"/><line x1="752.02" x2="759.42" y1="347.40" y2="347.40" stroke="#183512" stroke-width="1"/><line x1="774.78" x2="774.78" y1="347.40" y2="347.40" stroke="#3a3a3a" stroke-width="1"/><rect x="772.88" y="347.40" width="3.8" height="0.00" fill="#95f95c" stroke="#183512" stroke-width="1"/><rect x="771.08" y="347.40" width="7.4" height="0.00" fill="#95f95c" stroke="#183512" stroke-width="1"/><line x1="771.08" x2="778.48" y1="347.40" y2="347.40" stroke="#183512" stroke-width="1"/><line x1="793.84" x2="793.84" y1="347.40" y2="347.40" stroke="#3a3a3a" stroke-width="1"/><rect x="791.94" y="347.40" width="3.8" height="0.00" fill="#95f95c" stroke="#183512" stroke-width="1"/><rect x="790.14" y="347.40" width="7.4" height="0.00" fill="#95f95c" stroke="#183512" stroke-width="1"/><line x1="790.14" x2="797.54" y1="347.40" y2="347.40" stroke="#183512" stroke-width="1"/><line x1="812.90" x2="812.90" y1="347.40" y2="347.40" stroke="#3a3a3a" stroke-width="1"/><rect x="811.00" y="347.40" width="3.8" height="0.00" fill="#95f95c" stroke="#183512" stroke-width="1"/><rect x="809.20" y="347.40" width="7.4" height="0.00" fill="#95f95c" stroke="#183512" stroke-width="1"/><line x1="809.20" x2="816.60" y1="347.40" y2="347.40" stroke="#183512" stroke-width="1"/></g>
<polyline points="50.50,347.40 69.56,347.40 88.62,347.40 107.68,347.40 126.74,347.40 145.80,347.40 164.86,347.40 183.92,347.40 202.98,347.40 222.04,347.40 241.10,347.40 260.16,347.40 279.22,347.40 298.28,347.40 317.34,347.40 336.40,347.40 355.46,347.40 374.52,347.40 393.58,347.40 412.64,347.40 431.70,347.40 450.76,347.40 469.82,347.40 488.88,347.40 507.94,347.40 527.00,347.40 546.06,347.40 565.12,347.40 584.18,347.40 603.24,347.40 622.30,347.40 641.36,347.40 660.42,347.40 679.48,346.74 698.54,347.40 717.60,347.40 736.66,347.40 755.72,347.40 774.78,347.40 793.84,347.40 812.90,347.40" fill="none" stroke="#d82228" stroke-width="1.35" stroke-linejoin="round"/>
<polyline points="50.50,347.40 69.56,347.40 88.62,347.40 107.68,347.40 126.74,347.40 145.80,347.40 164.86,347.40 183.92,347.40 202.98,347.40 222.04,347.40 241.10,347.40 260.16,347.40 279.22,347.40 298.28,347.40 317.34,347.40 336.40,347.40 355.46,347.40 374.52,347.40 393.58,347.40 412.64,347.40 431.70,347.40 450.76,347.40 469.82,347.40 488.88,347.40 507.94,347.40 527.00,347.40 546.06,347.40 565.12,347.40 584.18,347.40 603.24,347.40 622.30,347.40 641.36,347.40 660.42,347.40 679.48,343.77 698.54,347.40 717.60,347.40 736.66,347.40 755.72,347.40 774.78,347.40 793.84,347.40 812.90,347.40" fill="none" stroke="#1818ac" stroke-width="1.4" stroke-linejoin="round"/>
<rect x="41.0" y="236.95" width="781.30" height="115.45" fill="none" stroke="#000" stroke-width="1.35"/>
<g stroke="#000" stroke-width="1.1"><line x1="36.0" x2="41.0" y1="347.40" y2="347.40"/><line x1="36.0" x2="41.0" y1="314.43" y2="314.43"/><line x1="36.0" x2="41.0" y1="281.47" y2="281.47"/><line x1="36.0" x2="41.0" y1="248.50" y2="248.50"/><line x1="50.50" x2="50.50" y1="352.4" y2="357.09999999999997"/><line x1="126.74" x2="126.74" y1="352.4" y2="357.09999999999997"/><line x1="202.98" x2="202.98" y1="352.4" y2="357.09999999999997"/><line x1="279.22" x2="279.22" y1="352.4" y2="357.09999999999997"/><line x1="355.46" x2="355.46" y1="352.4" y2="357.09999999999997"/><line x1="431.70" x2="431.70" y1="352.4" y2="357.09999999999997"/><line x1="507.94" x2="507.94" y1="352.4" y2="357.09999999999997"/><line x1="584.18" x2="584.18" y1="352.4" y2="357.09999999999997"/><line x1="660.42" x2="660.42" y1="352.4" y2="357.09999999999997"/><line x1="736.66" x2="736.66" y1="352.4" y2="357.09999999999997"/><line x1="812.90" x2="812.90" y1="352.4" y2="357.09999999999997"/></g>
<g font-family='"Liberation Sans", sans-serif' fill="#000"><text x="31.30" y="352.00" font-size="10.92" text-anchor="end" textLength="16.38" lengthAdjust="spacingAndGlyphs">0.0</text><text x="31.30" y="319.03" font-size="10.92" text-anchor="end" textLength="16.38" lengthAdjust="spacingAndGlyphs">0.2</text><text x="31.30" y="286.07" font-size="10.92" text-anchor="end" textLength="16.38" lengthAdjust="spacingAndGlyphs">0.4</text><text x="31.30" y="253.10" font-size="10.92" text-anchor="end" textLength="16.38" lengthAdjust="spacingAndGlyphs">0.6</text></g>
<text x="41.60" y="232.60" font-size="12.83" text-anchor="start" textLength="164.64" lengthAdjust="spacingAndGlyphs" font-family='"Liberation Sans", sans-serif' fill="#000">Total precipitation (mm/6h)</text>
<g stroke="#d8d8d8" stroke-width="0.8" stroke-dasharray="2.6,1.36" stroke-dashoffset="0.75"><line x1="41.0" x2="822.3" y1="469.50" y2="469.50"/><line x1="41.0" x2="822.3" y1="433.67" y2="433.67"/><line x1="41.0" x2="822.3" y1="397.84" y2="397.84"/><line x1="50.50" x2="50.50" y1="379.2" y2="494.55"/><line x1="126.74" x2="126.74" y1="379.2" y2="494.55"/><line x1="202.98" x2="202.98" y1="379.2" y2="494.55"/><line x1="279.22" x2="279.22" y1="379.2" y2="494.55"/><line x1="355.46" x2="355.46" y1="379.2" y2="494.55"/><line x1="431.70" x2="431.70" y1="379.2" y2="494.55"/><line x1="507.94" x2="507.94" y1="379.2" y2="494.55"/><line x1="584.18" x2="584.18" y1="379.2" y2="494.55"/><line x1="660.42" x2="660.42" y1="379.2" y2="494.55"/><line x1="736.66" x2="736.66" y1="379.2" y2="494.55"/><line x1="812.90" x2="812.90" y1="379.2" y2="494.55"/></g>
<g><line x1="50.50" x2="50.50" y1="450.15" y2="450.15" stroke="#3a3a3a" stroke-width="1"/><rect x="48.60" y="450.15" width="3.8" height="0.00" fill="#95f95c" stroke="#183512" stroke-width="1"/><rect x="46.80" y="450.15" width="7.4" height="0.00" fill="#95f95c" stroke="#183512" stroke-width="1"/><line x1="46.80" x2="54.20" y1="450.15" y2="450.15" stroke="#183512" stroke-width="1"/><line x1="69.56" x2="69.56" y1="446.21" y2="469.68" stroke="#3a3a3a" stroke-width="1"/><rect x="67.66" y="454.27" width="3.8" height="8.06" fill="#95f95c" stroke="#183512" stroke-width="1"/><rect x="65.86" y="456.24" width="7.4" height="4.84" fill="#95f95c" stroke="#183512" stroke-width="1"/><line x1="65.86" x2="73.26" y1="459.83" y2="459.83" stroke="#183512" stroke-width="1"/><line x1="88.62" x2="88.62" y1="429.37" y2="446.93" stroke="#3a3a3a" stroke-width="1"/><rect x="86.72" y="430.98" width="3.8" height="9.85" fill="#95f95c" stroke="#183512" stroke-width="1"/><rect x="84.92" y="432.42" width="7.4" height="6.45" fill="#95f95c" stroke="#183512" stroke-width="1"/><line x1="84.92" x2="92.32" y1="436.00" y2="436.00" stroke="#183512" stroke-width="1"/><line x1="107.68" x2="107.68" y1="428.83" y2="451.41" stroke="#3a3a3a" stroke-width="1"/><rect x="105.78" y="435.64" width="3.8" height="11.29" fill="#95f95c" stroke="#183512" stroke-width="1"/><rect x="103.98" y="436.89" width="7.4" height="8.78" fill="#95f95c" stroke="#183512" stroke-width="1"/><line x1="103.98" x2="111.38" y1="443.70" y2="443.70" stroke="#183512" stroke-width="1"/><line x1="126.74" x2="126.74" y1="438.69" y2="458.93" stroke="#3a3a3a" stroke-width="1"/><rect x="124.84" y="439.40" width="3.8" height="15.23" fill="#95f95c" stroke="#183512" stroke-width="1"/><rect x="123.04" y="444.24" width="7.4" height="5.73" fill="#95f95c" stroke="#183512" stroke-width="1"/><line x1="123.04" x2="130.44" y1="446.93" y2="446.93" stroke="#183512" stroke-width="1"/><line x1="145.80" x2="145.80" y1="453.20" y2="477.20" stroke="#3a3a3a" stroke-width="1"/><rect x="143.90" y="455.88" width="3.8" height="15.41" fill="#95f95c" stroke="#183512" stroke-width="1"/><rect x="142.10" y="461.62" width="7.4" height="5.73" fill="#95f95c" stroke="#183512" stroke-width="1"/><line x1="142.10" x2="149.50" y1="465.56" y2="465.56" stroke="#183512" stroke-width="1"/><line x1="164.86" x2="164.86" y1="424.00" y2="451.76" stroke="#3a3a3a" stroke-width="1"/><rect x="162.96" y="434.57" width="3.8" height="15.41" fill="#95f95c" stroke="#183512" stroke-width="1"/><rect x="161.16" y="435.10" width="7.4" height="10.57" fill="#95f95c" stroke="#183512" stroke-width="1"/><line x1="161.16" x2="168.56" y1="439.94" y2="439.94" stroke="#183512" stroke-width="1"/><line x1="183.92" x2="183.92" y1="430.45" y2="460.01" stroke="#3a3a3a" stroke-width="1"/><rect x="182.02" y="435.46" width="3.8" height="15.05" fill="#95f95c" stroke="#183512" stroke-width="1"/><rect x="180.22" y="439.94" width="7.4" height="6.99" fill="#95f95c" stroke="#183512" stroke-width="1"/><line x1="180.22" x2="187.62" y1="442.81" y2="442.81" stroke="#183512" stroke-width="1"/><line x1="202.98" x2="202.98" y1="441.19" y2="475.95" stroke="#3a3a3a" stroke-width="1"/><rect x="201.08" y="454.63" width="3.8" height="18.99" fill="#95f95c" stroke="#183512" stroke-width="1"/><rect x="199.28" y="460.54" width="7.4" height="8.96" fill="#95f95c" stroke="#183512" stroke-width="1"/><line x1="199.28" x2="206.68" y1="465.56" y2="465.56" stroke="#183512" stroke-width="1"/><line x1="222.04" x2="222.04" y1="465.92" y2="488.67" stroke="#3a3a3a" stroke-width="1"/><rect x="220.14" y="471.83" width="3.8" height="10.57" fill="#95f95c" stroke="#183512" stroke-width="1"/><rect x="218.34" y="474.52" width="7.4" height="5.55" fill="#95f95c" stroke="#183512" stroke-width="1"/><line x1="218.34" x2="225.74" y1="477.74" y2="477.74" stroke="#183512" stroke-width="1"/><line x1="241.10" x2="241.10" y1="412.71" y2="432.24" stroke="#3a3a3a" stroke-width="1"/><rect x="239.20" y="417.37" width="3.8" height="10.93" fill="#95f95c" stroke="#183512" stroke-width="1"/><rect x="237.40" y="420.41" width="7.4" height="6.45" fill="#95f95c" stroke="#183512" stroke-width="1"/><line x1="237.40" x2="244.80" y1="424.00" y2="424.00" stroke="#183512" stroke-width="1"/><line x1="260.16" x2="260.16" y1="439.40" y2="470.93" stroke="#3a3a3a" stroke-width="1"/><rect x="258.26" y="444.24" width="3.8" height="16.30" fill="#95f95c" stroke="#183512" stroke-width="1"/><rect x="256.46" y="446.93" width="7.4" height="9.85" fill="#95f95c" stroke="#183512" stroke-width="1"/><line x1="256.46" x2="263.86" y1="452.30" y2="452.30" stroke="#183512" stroke-width="1"/><line x1="279.22" x2="279.22" y1="447.82" y2="474.52" stroke="#3a3a3a" stroke-width="1"/><rect x="277.32" y="448.72" width="3.8" height="13.62" fill="#95f95c" stroke="#183512" stroke-width="1"/><rect x="275.52" y="452.84" width="7.4" height="7.70" fill="#95f95c" stroke="#183512" stroke-width="1"/><line x1="275.52" x2="282.92" y1="456.96" y2="456.96" stroke="#183512" stroke-width="1"/><line x1="298.28" x2="298.28" y1="450.51" y2="471.29" stroke="#3a3a3a" stroke-width="1"/><rect x="296.38" y="453.20" width="3.8" height="13.79" fill="#95f95c" stroke="#183512" stroke-width="1"/><rect x="294.58" y="455.35" width="7.4" height="6.63" fill="#95f95c" stroke="#183512" stroke-width="1"/><line x1="294.58" x2="301.98" y1="458.21" y2="458.21" stroke="#183512" stroke-width="1"/><line x1="317.34" x2="317.34" y1="402.68" y2="433.67" stroke="#3a3a3a" stroke-width="1"/><rect x="315.44" y="406.80" width="3.8" height="19.35" fill="#95f95c" stroke="#183512" stroke-width="1"/><rect x="313.64" y="412.71" width="7.4" height="11.29" fill="#95f95c" stroke="#183512" stroke-width="1"/><line x1="313.64" x2="321.04" y1="414.86" y2="414.86" stroke="#183512" stroke-width="1"/><line x1="336.40" x2="336.40" y1="412.71" y2="458.93" stroke="#3a3a3a" stroke-width="1"/><rect x="334.50" y="419.52" width="3.8" height="32.78" fill="#95f95c" stroke="#183512" stroke-width="1"/><rect x="332.70" y="435.10" width="7.4" height="9.49" fill="#95f95c" stroke="#183512" stroke-width="1"/><line x1="332.70" x2="340.10" y1="439.94" y2="439.94" stroke="#183512" stroke-width="1"/><line x1="355.46" x2="355.46" y1="425.61" y2="461.62" stroke="#3a3a3a" stroke-width="1"/><rect x="353.56" y="429.73" width="3.8" height="20.78" fill="#95f95c" stroke="#183512" stroke-width="1"/><rect x="351.76" y="432.77" width="7.4" height="14.15" fill="#95f95c" stroke="#183512" stroke-width="1"/><line x1="351.76" x2="359.16" y1="436.36" y2="436.36" stroke="#183512" stroke-width="1"/><line x1="374.52" x2="374.52" y1="448.72" y2="489.56" stroke="#3a3a3a" stroke-width="1"/><rect x="372.62" y="451.41" width="3.8" height="21.32" fill="#95f95c" stroke="#183512" stroke-width="1"/><rect x="370.82" y="460.36" width="7.4" height="8.78" fill="#95f95c" stroke="#183512" stroke-width="1"/><line x1="370.82" x2="378.22" y1="465.56" y2="465.56" stroke="#183512" stroke-width="1"/><line x1="393.58" x2="393.58" y1="424.71" y2="461.08" stroke="#3a3a3a" stroke-width="1"/><rect x="391.68" y="432.24" width="3.8" height="18.27" fill="#95f95c" stroke="#183512" stroke-width="1"/><rect x="389.88" y="435.82" width="7.4" height="8.06" fill="#95f95c" stroke="#183512" stroke-width="1"/><line x1="389.88" x2="397.28" y1="439.94" y2="439.94" stroke="#183512" stroke-width="1"/><line x1="412.64" x2="412.64" y1="431.52" y2="470.57" stroke="#3a3a3a" stroke-width="1"/><rect x="410.74" y="434.57" width="3.8" height="27.41" fill="#95f95c" stroke="#183512" stroke-width="1"/><rect x="408.94" y="442.63" width="7.4" height="11.47" fill="#95f95c" stroke="#183512" stroke-width="1"/><line x1="408.94" x2="416.34" y1="448.54" y2="448.54" stroke="#183512" stroke-width="1"/><line x1="431.70" x2="431.70" y1="442.81" y2="471.83" stroke="#3a3a3a" stroke-width="1"/><rect x="429.80" y="448.72" width="3.8" height="20.06" fill="#95f95c" stroke="#183512" stroke-width="1"/><rect x="428.00" y="449.97" width="7.4" height="9.49" fill="#95f95c" stroke="#183512" stroke-width="1"/><line x1="428.00" x2="435.40" y1="455.17" y2="455.17" stroke="#183512" stroke-width="1"/><line x1="450.76" x2="450.76" y1="442.81" y2="488.31" stroke="#3a3a3a" stroke-width="1"/><rect x="448.86" y="453.56" width="3.8" height="27.59" fill="#95f95c" stroke="#183512" stroke-width="1"/><rect x="447.06" y="458.93" width="7.4" height="16.48" fill="#95f95c" stroke="#183512" stroke-width="1"/><line x1="447.06" x2="454.46" y1="467.35" y2="467.35" stroke="#183512" stroke-width="1"/><line x1="469.82" x2="469.82" y1="390.67" y2="454.09" stroke="#3a3a3a" stroke-width="1"/><rect x="467.92" y="409.66" width="3.8" height="26.16" fill="#95f95c" stroke="#183512" stroke-width="1"/><rect x="466.12" y="413.43" width="7.4" height="18.09" fill="#95f95c" stroke="#183512" stroke-width="1"/><line x1="466.12" x2="473.52" y1="418.44" y2="418.44" stroke="#183512" stroke-width="1"/><line x1="488.88" x2="488.88" y1="401.42" y2="450.51" stroke="#3a3a3a" stroke-width="1"/><rect x="486.98" y="417.73" width="3.8" height="27.95" fill="#95f95c" stroke="#183512" stroke-width="1"/><rect x="485.18" y="426.50" width="7.4" height="13.97" fill="#95f95c" stroke="#183512" stroke-width="1"/><line x1="485.18" x2="492.58" y1="430.09" y2="430.09" stroke="#183512" stroke-width="1"/><line x1="507.94" x2="507.94" y1="414.50" y2="470.04" stroke="#3a3a3a" stroke-width="1"/><rect x="506.04" y="423.28" width="3.8" height="33.14" fill="#95f95c" stroke="#183512" stroke-width="1"/><rect x="504.24" y="435.10" width="7.4" height="13.62" fill="#95f95c" stroke="#183512" stroke-width="1"/><line x1="504.24" x2="511.64" y1="443.52" y2="443.52" stroke="#183512" stroke-width="1"/><line x1="527.00" x2="527.00" y1="410.56" y2="458.21" stroke="#3a3a3a" stroke-width="1"/><rect x="525.10" y="419.70" width="3.8" height="30.81" fill="#95f95c" stroke="#183512" stroke-width="1"/><rect x="523.30" y="425.61" width="7.4" height="23.11" fill="#95f95c" stroke="#183512" stroke-width="1"/><line x1="523.30" x2="530.70" y1="440.48" y2="440.48" stroke="#183512" stroke-width="1"/><line x1="546.06" x2="546.06" y1="387.99" y2="429.19" stroke="#3a3a3a" stroke-width="1"/><rect x="544.16" y="393.72" width="3.8" height="25.44" fill="#95f95c" stroke="#183512" stroke-width="1"/><rect x="542.36" y="403.93" width="7.4" height="10.21" fill="#95f95c" stroke="#183512" stroke-width="1"/><line x1="542.36" x2="549.76" y1="407.69" y2="407.69" stroke="#183512" stroke-width="1"/><line x1="565.12" x2="565.12" y1="397.84" y2="452.30" stroke="#3a3a3a" stroke-width="1"/><rect x="563.22" y="413.78" width="3.8" height="31.35" fill="#95f95c" stroke="#183512" stroke-width="1"/><rect x="561.42" y="420.95" width="7.4" height="17.20" fill="#95f95c" stroke="#183512" stroke-width="1"/><line x1="561.42" x2="568.82" y1="427.40" y2="427.40" stroke="#183512" stroke-width="1"/><line x1="584.18" x2="584.18" y1="417.73" y2="451.41" stroke="#3a3a3a" stroke-width="1"/><rect x="582.28" y="426.50" width="3.8" height="19.17" fill="#95f95c" stroke="#183512" stroke-width="1"/><rect x="580.48" y="428.30" width="7.4" height="14.51" fill="#95f95c" stroke="#183512" stroke-width="1"/><line x1="580.48" x2="587.88" y1="432.77" y2="432.77" stroke="#183512" stroke-width="1"/><line x1="603.24" x2="603.24" y1="403.57" y2="457.68" stroke="#3a3a3a" stroke-width="1"/><rect x="601.34" y="420.41" width="3.8" height="36.37" fill="#95f95c" stroke="#183512" stroke-width="1"/><rect x="599.54" y="431.88" width="7.4" height="16.30" fill="#95f95c" stroke="#183512" stroke-width="1"/><line x1="599.54" x2="606.94" y1="439.94" y2="439.94" stroke="#183512" stroke-width="1"/><line x1="622.30" x2="622.30" y1="384.94" y2="426.15" stroke="#3a3a3a" stroke-width="1"/><rect x="620.40" y="393.72" width="3.8" height="31.35" fill="#95f95c" stroke="#183512" stroke-width="1"/><rect x="618.60" y="399.63" width="7.4" height="24.36" fill="#95f95c" stroke="#183512" stroke-width="1"/><line x1="618.60" x2="626.00" y1="407.33" y2="407.33" stroke="#183512" stroke-width="1"/><line x1="641.36" x2="641.36" y1="399.63" y2="441.73" stroke="#3a3a3a" stroke-width="1"/><rect x="639.46" y="403.57" width="3.8" height="30.10" fill="#95f95c" stroke="#183512" stroke-width="1"/><rect x="637.66" y="414.50" width="7.4" height="16.48" fill="#95f95c" stroke="#183512" stroke-width="1"/><line x1="637.66" x2="645.06" y1="423.46" y2="423.46" stroke="#183512" stroke-width="1"/><line x1="660.42" x2="660.42" y1="424.71" y2="449.26" stroke="#3a3a3a" stroke-width="1"/><rect x="658.52" y="432.24" width="3.8" height="13.79" fill="#95f95c" stroke="#183512" stroke-width="1"/><rect x="656.72" y="436.36" width="7.4" height="7.52" fill="#95f95c" stroke="#183512" stroke-width="1"/><line x1="656.72" x2="664.12" y1="440.84" y2="440.84" stroke="#183512" stroke-width="1"/><line x1="679.48" x2="679.48" y1="426.86" y2="481.14" stroke="#3a3a3a" stroke-width="1"/><rect x="677.58" y="435.46" width="3.8" height="32.25" fill="#95f95c" stroke="#183512" stroke-width="1"/><rect x="675.78" y="436.89" width="7.4" height="26.87" fill="#95f95c" stroke="#183512" stroke-width="1"/><line x1="675.78" x2="683.18" y1="448.90" y2="448.90" stroke="#183512" stroke-width="1"/><line x1="698.54" x2="698.54" y1="387.63" y2="460.01" stroke="#3a3a3a" stroke-width="1"/><rect x="696.64" y="397.30" width="3.8" height="36.37" fill="#95f95c" stroke="#183512" stroke-width="1"/><rect x="694.84" y="400.89" width="7.4" height="22.57" fill="#95f95c" stroke="#183512" stroke-width="1"/><line x1="694.84" x2="702.24" y1="413.07" y2="413.07" stroke="#183512" stroke-width="1"/><line x1="717.60" x2="717.60" y1="403.57" y2="454.63" stroke="#3a3a3a" stroke-width="1"/><rect x="715.70" y="410.92" width="3.8" height="35.47" fill="#95f95c" stroke="#183512" stroke-width="1"/><rect x="713.90" y="420.95" width="7.4" height="20.24" fill="#95f95c" stroke="#183512" stroke-width="1"/><line x1="713.90" x2="721.30" y1="435.46" y2="435.46" stroke="#183512" stroke-width="1"/><line x1="736.66" x2="736.66" y1="426.15" y2="465.20" stroke="#3a3a3a" stroke-width="1"/><rect x="734.76" y="432.77" width="3.8" height="24.36" fill="#95f95c" stroke="#183512" stroke-width="1"/><rect x="732.96" y="436.36" width="7.4" height="13.26" fill="#95f95c" stroke="#183512" stroke-width="1"/><line x1="732.96" x2="740.36" y1="443.52" y2="443.52" stroke="#183512" stroke-width="1"/><line x1="755.72" x2="755.72" y1="435.10" y2="480.61" stroke="#3a3a3a" stroke-width="1"/><rect x="753.82" y="438.15" width="3.8" height="34.93" fill="#95f95c" stroke="#183512" stroke-width="1"/><rect x="752.02" y="445.67" width="7.4" height="22.57" fill="#95f95c" stroke="#183512" stroke-width="1"/><line x1="752.02" x2="759.42" y1="460.01" y2="460.01" stroke="#183512" stroke-width="1"/><line x1="774.78" x2="774.78" y1="387.27" y2="437.61" stroke="#3a3a3a" stroke-width="1"/><rect x="772.88" y="399.09" width="3.8" height="31.89" fill="#95f95c" stroke="#183512" stroke-width="1"/><rect x="771.08" y="406.98" width="7.4" height="17.74" fill="#95f95c" stroke="#183512" stroke-width="1"/><line x1="771.08" x2="778.48" y1="415.04" y2="415.04" stroke="#183512" stroke-width="1"/><line x1="793.84" x2="793.84" y1="405.01" y2="467.35" stroke="#3a3a3a" stroke-width="1"/><rect x="791.94" y="415.04" width="3.8" height="41.38" fill="#95f95c" stroke="#183512" stroke-width="1"/><rect x="790.14" y="426.50" width="7.4" height="26.34" fill="#95f95c" stroke="#183512" stroke-width="1"/><line x1="790.14" x2="797.54" y1="440.84" y2="440.84" stroke="#183512" stroke-width="1"/><line x1="812.90" x2="812.90" y1="427.40" y2="469.50" stroke="#3a3a3a" stroke-width="1"/><rect x="811.00" y="435.10" width="3.8" height="24.36" fill="#95f95c" stroke="#183512" stroke-width="1"/><rect x="809.20" y="440.84" width="7.4" height="12.00" fill="#95f95c" stroke="#183512" stroke-width="1"/><line x1="809.20" x2="816.60" y1="446.03" y2="446.03" stroke="#183512" stroke-width="1"/></g>
<polyline points="50.50,450.15 69.56,454.99 88.62,439.76 107.68,447.29 126.74,448.18 145.80,463.41 164.86,430.98 183.92,440.84 202.98,461.98 222.04,477.74 241.10,424.00 260.16,444.60 279.22,460.36 298.28,455.88 317.34,407.87 336.40,440.84 355.46,430.98 374.52,463.41 393.58,449.26 412.64,451.76 431.70,456.78 450.76,453.20 469.82,416.83 488.88,422.20 507.94,446.93 527.00,426.15 546.06,407.33 565.12,421.31 584.18,429.19 603.24,420.95 622.30,429.19 641.36,394.97 660.42,438.69 679.48,435.82 698.54,400.89 717.60,401.78 736.66,430.98 755.72,433.67 774.78,405.36 793.84,425.07 812.90,446.03" fill="none" stroke="#d82228" stroke-width="1.35" stroke-linejoin="round"/>
<polyline points="50.50,450.15 69.56,456.96 88.62,436.89 107.68,442.09 126.74,446.03 145.80,464.66 164.86,440.84 183.92,443.34 202.98,463.41 222.04,476.31 241.10,425.07 260.16,452.30 279.22,456.78 298.28,458.21 317.34,416.83 336.40,438.69 355.46,439.40 374.52,463.77 393.58,441.19 412.64,449.61 431.70,458.21 450.76,466.45 469.82,424.00 488.88,430.98 507.94,440.84 527.00,437.25 546.06,409.13 565.12,428.30 584.18,434.03 603.24,437.61 622.30,410.20 641.36,421.31 660.42,438.15 679.48,449.61 698.54,414.14 717.60,431.88 736.66,443.88 755.72,457.14 774.78,415.04 793.84,439.04 812.90,445.67" fill="none" stroke="#1818ac" stroke-width="1.4" stroke-linejoin="round"/>
<rect x="41.0" y="379.2" width="781.30" height="115.35" fill="none" stroke="#000" stroke-width="1.35"/>
<g stroke="#000" stroke-width="1.1"><line x1="36.0" x2="41.0" y1="469.50" y2="469.50"/><line x1="36.0" x2="41.0" y1="433.67" y2="433.67"/><line x1="36.0" x2="41.0" y1="397.84" y2="397.84"/><line x1="50.50" x2="50.50" y1="494.55" y2="499.25"/><line x1="126.74" x2="126.74" y1="494.55" y2="499.25"/><line x1="202.98" x2="202.98" y1="494.55" y2="499.25"/><line x1="279.22" x2="279.22" y1="494.55" y2="499.25"/><line x1="355.46" x2="355.46" y1="494.55" y2="499.25"/><line x1="431.70" x2="431.70" y1="494.55" y2="499.25"/><line x1="507.94" x2="507.94" y1="494.55" y2="499.25"/><line x1="584.18" x2="584.18" y1="494.55" y2="499.25"/><line x1="660.42" x2="660.42" y1="494.55" y2="499.25"/><line x1="736.66" x2="736.66" y1="494.55" y2="499.25"/><line x1="812.90" x2="812.90" y1="494.55" y2="499.25"/></g>
<g font-family='"Liberation Sans", sans-serif' fill="#000"><text x="31.30" y="474.10" font-size="10.92" text-anchor="end" textLength="6.55" lengthAdjust="spacingAndGlyphs">2</text><text x="31.30" y="438.27" font-size="10.92" text-anchor="end" textLength="6.55" lengthAdjust="spacingAndGlyphs">4</text><text x="31.30" y="402.44" font-size="10.92" text-anchor="end" textLength="6.55" lengthAdjust="spacingAndGlyphs">6</text></g>
<text x="41.60" y="374.85" font-size="12.83" text-anchor="start" textLength="135.49" lengthAdjust="spacingAndGlyphs" font-family='"Liberation Sans", sans-serif' fill="#000">10m wind speed (m/s)</text>
<g stroke="#d8d8d8" stroke-width="0.8" stroke-dasharray="2.6,1.36" stroke-dashoffset="0.75"><line x1="41.0" x2="822.3" y1="620.50" y2="620.50"/><line x1="41.0" x2="822.3" y1="578.22" y2="578.22"/><line x1="41.0" x2="822.3" y1="535.95" y2="535.95"/><line x1="50.50" x2="50.50" y1="521.4" y2="636.9"/><line x1="126.74" x2="126.74" y1="521.4" y2="636.9"/><line x1="202.98" x2="202.98" y1="521.4" y2="636.9"/><line x1="279.22" x2="279.22" y1="521.4" y2="636.9"/><line x1="355.46" x2="355.46" y1="521.4" y2="636.9"/><line x1="431.70" x2="431.70" y1="521.4" y2="636.9"/><line x1="507.94" x2="507.94" y1="521.4" y2="636.9"/><line x1="584.18" x2="584.18" y1="521.4" y2="636.9"/><line x1="660.42" x2="660.42" y1="521.4" y2="636.9"/><line x1="736.66" x2="736.66" y1="521.4" y2="636.9"/><line x1="812.90" x2="812.90" y1="521.4" y2="636.9"/></g>
<g><line x1="50.50" x2="50.50" y1="570.19" y2="570.19" stroke="#3a3a3a" stroke-width="1"/><rect x="48.60" y="570.19" width="3.8" height="0.00" fill="#95f95c" stroke="#183512" stroke-width="1"/><rect x="46.80" y="570.19" width="7.4" height="0.00" fill="#95f95c" stroke="#183512" stroke-width="1"/><line x1="46.80" x2="54.20" y1="570.19" y2="570.19" stroke="#183512" stroke-width="1"/><line x1="69.56" x2="69.56" y1="550.74" y2="559.20" stroke="#3a3a3a" stroke-width="1"/><rect x="67.66" y="552.86" width="3.8" height="5.50" fill="#95f95c" stroke="#183512" stroke-width="1"/><rect x="65.86" y="553.70" width="7.4" height="3.38" fill="#95f95c" stroke="#183512" stroke-width="1"/><line x1="65.86" x2="73.26" y1="555.81" y2="555.81" stroke="#183512" stroke-width="1"/><line x1="88.62" x2="88.62" y1="554.97" y2="564.27" stroke="#3a3a3a" stroke-width="1"/><rect x="86.72" y="556.24" width="3.8" height="6.34" fill="#95f95c" stroke="#183512" stroke-width="1"/><rect x="84.92" y="557.51" width="7.4" height="3.38" fill="#95f95c" stroke="#183512" stroke-width="1"/><line x1="84.92" x2="92.32" y1="559.20" y2="559.20" stroke="#183512" stroke-width="1"/><line x1="107.68" x2="107.68" y1="568.50" y2="580.76" stroke="#3a3a3a" stroke-width="1"/><rect x="105.78" y="570.61" width="3.8" height="5.50" fill="#95f95c" stroke="#183512" stroke-width="1"/><rect x="103.98" y="571.88" width="7.4" height="3.38" fill="#95f95c" stroke="#183512" stroke-width="1"/><line x1="103.98" x2="111.38" y1="573.99" y2="573.99" stroke="#183512" stroke-width="1"/><line x1="126.74" x2="126.74" y1="573.99" y2="586.67" stroke="#3a3a3a" stroke-width="1"/><rect x="124.84" y="574.42" width="3.8" height="7.61" fill="#95f95c" stroke="#183512" stroke-width="1"/><rect x="123.04" y="576.95" width="7.4" height="4.23" fill="#95f95c" stroke="#183512" stroke-width="1"/><line x1="123.04" x2="130.44" y1="579.49" y2="579.49" stroke="#183512" stroke-width="1"/><line x1="145.80" x2="145.80" y1="557.08" y2="571.88" stroke="#3a3a3a" stroke-width="1"/><rect x="143.90" y="562.16" width="3.8" height="8.88" fill="#95f95c" stroke="#183512" stroke-width="1"/><rect x="142.10" y="563.85" width="7.4" height="5.50" fill="#95f95c" stroke="#183512" stroke-width="1"/><line x1="142.10" x2="149.50" y1="566.81" y2="566.81" stroke="#183512" stroke-width="1"/><line x1="164.86" x2="164.86" y1="558.77" y2="570.61" stroke="#3a3a3a" stroke-width="1"/><rect x="162.96" y="559.62" width="3.8" height="8.03" fill="#95f95c" stroke="#183512" stroke-width="1"/><rect x="161.16" y="560.46" width="7.4" height="5.07" fill="#95f95c" stroke="#183512" stroke-width="1"/><line x1="161.16" x2="168.56" y1="563.00" y2="563.00" stroke="#183512" stroke-width="1"/><line x1="183.92" x2="183.92" y1="569.34" y2="585.41" stroke="#3a3a3a" stroke-width="1"/><rect x="182.02" y="572.30" width="3.8" height="11.84" fill="#95f95c" stroke="#183512" stroke-width="1"/><rect x="180.22" y="575.68" width="7.4" height="5.92" fill="#95f95c" stroke="#183512" stroke-width="1"/><line x1="180.22" x2="187.62" y1="579.07" y2="579.07" stroke="#183512" stroke-width="1"/><line x1="202.98" x2="202.98" y1="577.80" y2="596.40" stroke="#3a3a3a" stroke-width="1"/><rect x="201.08" y="581.60" width="3.8" height="12.68" fill="#95f95c" stroke="#183512" stroke-width="1"/><rect x="199.28" y="584.98" width="7.4" height="6.34" fill="#95f95c" stroke="#183512" stroke-width="1"/><line x1="199.28" x2="206.68" y1="588.37" y2="588.37" stroke="#183512" stroke-width="1"/><line x1="222.04" x2="222.04" y1="566.38" y2="586.25" stroke="#3a3a3a" stroke-width="1"/><rect x="220.14" y="570.61" width="3.8" height="12.26" fill="#95f95c" stroke="#183512" stroke-width="1"/><rect x="218.34" y="575.68" width="7.4" height="5.92" fill="#95f95c" stroke="#183512" stroke-width="1"/><line x1="218.34" x2="225.74" y1="578.22" y2="578.22" stroke="#183512" stroke-width="1"/><line x1="241.10" x2="241.10" y1="558.77" y2="576.95" stroke="#3a3a3a" stroke-width="1"/><rect x="239.20" y="560.46" width="3.8" height="13.11" fill="#95f95c" stroke="#183512" stroke-width="1"/><rect x="237.40" y="566.81" width="7.4" height="5.07" fill="#95f95c" stroke="#183512" stroke-width="1"/><line x1="237.40" x2="244.80" y1="568.92" y2="568.92" stroke="#183512" stroke-width="1"/><line x1="260.16" x2="260.16" y1="573.57" y2="594.28" stroke="#3a3a3a" stroke-width="1"/><rect x="258.26" y="579.49" width="3.8" height="14.80" fill="#95f95c" stroke="#183512" stroke-width="1"/><rect x="256.46" y="583.72" width="7.4" height="7.61" fill="#95f95c" stroke="#183512" stroke-width="1"/><line x1="256.46" x2="263.86" y1="587.52" y2="587.52" stroke="#183512" stroke-width="1"/><line x1="279.22" x2="279.22" y1="586.67" y2="614.58" stroke="#3a3a3a" stroke-width="1"/><rect x="277.32" y="592.59" width="3.8" height="16.06" fill="#95f95c" stroke="#183512" stroke-width="1"/><rect x="275.52" y="600.63" width="7.4" height="7.19" fill="#95f95c" stroke="#183512" stroke-width="1"/><line x1="275.52" x2="282.92" y1="603.16" y2="603.16" stroke="#183512" stroke-width="1"/><line x1="298.28" x2="298.28" y1="573.99" y2="596.82" stroke="#3a3a3a" stroke-width="1"/><rect x="296.38" y="577.37" width="3.8" height="14.37" fill="#95f95c" stroke="#183512" stroke-width="1"/><rect x="294.58" y="582.45" width="7.4" height="8.45" fill="#95f95c" stroke="#183512" stroke-width="1"/><line x1="294.58" x2="301.98" y1="586.25" y2="586.25" stroke="#183512" stroke-width="1"/><line x1="317.34" x2="317.34" y1="569.77" y2="587.94" stroke="#3a3a3a" stroke-width="1"/><rect x="315.44" y="572.72" width="3.8" height="10.15" fill="#95f95c" stroke="#183512" stroke-width="1"/><rect x="313.64" y="573.99" width="7.4" height="6.34" fill="#95f95c" stroke="#183512" stroke-width="1"/><line x1="313.64" x2="321.04" y1="576.95" y2="576.95" stroke="#183512" stroke-width="1"/><line x1="336.40" x2="336.40" y1="587.10" y2="607.39" stroke="#3a3a3a" stroke-width="1"/><rect x="334.50" y="590.90" width="3.8" height="13.11" fill="#95f95c" stroke="#183512" stroke-width="1"/><rect x="332.70" y="592.59" width="7.4" height="7.19" fill="#95f95c" stroke="#183512" stroke-width="1"/><line x1="332.70" x2="340.10" y1="595.98" y2="595.98" stroke="#183512" stroke-width="1"/><line x1="355.46" x2="355.46" y1="606.97" y2="622.61" stroke="#3a3a3a" stroke-width="1"/><rect x="353.56" y="609.50" width="3.8" height="9.30" fill="#95f95c" stroke="#183512" stroke-width="1"/><rect x="351.76" y="611.19" width="7.4" height="5.50" fill="#95f95c" stroke="#183512" stroke-width="1"/><line x1="351.76" x2="359.16" y1="613.73" y2="613.73" stroke="#183512" stroke-width="1"/><line x1="374.52" x2="374.52" y1="582.87" y2="599.78" stroke="#3a3a3a" stroke-width="1"/><rect x="372.62" y="585.41" width="3.8" height="9.72" fill="#95f95c" stroke="#183512" stroke-width="1"/><rect x="370.82" y="587.10" width="7.4" height="6.34" fill="#95f95c" stroke="#183512" stroke-width="1"/><line x1="370.82" x2="378.22" y1="590.06" y2="590.06" stroke="#183512" stroke-width="1"/><line x1="393.58" x2="393.58" y1="582.87" y2="595.98" stroke="#3a3a3a" stroke-width="1"/><rect x="391.68" y="585.41" width="3.8" height="8.03" fill="#95f95c" stroke="#183512" stroke-width="1"/><rect x="389.88" y="585.83" width="7.4" height="4.23" fill="#95f95c" stroke="#183512" stroke-width="1"/><line x1="389.88" x2="397.28" y1="587.94" y2="587.94" stroke="#183512" stroke-width="1"/><line x1="412.64" x2="412.64" y1="587.94" y2="612.04" stroke="#3a3a3a" stroke-width="1"/><rect x="410.74" y="599.78" width="3.8" height="10.57" fill="#95f95c" stroke="#183512" stroke-width="1"/><rect x="408.94" y="601.89" width="7.4" height="5.92" fill="#95f95c" stroke="#183512" stroke-width="1"/><line x1="408.94" x2="416.34" y1="604.85" y2="604.85" stroke="#183512" stroke-width="1"/><line x1="431.70" x2="431.70" y1="593.02" y2="631.91" stroke="#3a3a3a" stroke-width="1"/><rect x="429.80" y="607.81" width="3.8" height="16.06" fill="#95f95c" stroke="#183512" stroke-width="1"/><rect x="428.00" y="613.73" width="7.4" height="8.03" fill="#95f95c" stroke="#183512" stroke-width="1"/><line x1="428.00" x2="435.40" y1="617.96" y2="617.96" stroke="#183512" stroke-width="1"/><line x1="450.76" x2="450.76" y1="577.80" y2="606.97" stroke="#3a3a3a" stroke-width="1"/><rect x="448.86" y="583.72" width="3.8" height="19.87" fill="#95f95c" stroke="#183512" stroke-width="1"/><rect x="447.06" y="588.37" width="7.4" height="8.03" fill="#95f95c" stroke="#183512" stroke-width="1"/><line x1="447.06" x2="454.46" y1="592.59" y2="592.59" stroke="#183512" stroke-width="1"/><line x1="469.82" x2="469.82" y1="554.55" y2="581.60" stroke="#3a3a3a" stroke-width="1"/><rect x="467.92" y="560.89" width="3.8" height="20.29" fill="#95f95c" stroke="#183512" stroke-width="1"/><rect x="466.12" y="563.00" width="7.4" height="13.95" fill="#95f95c" stroke="#183512" stroke-width="1"/><line x1="466.12" x2="473.52" y1="570.61" y2="570.61" stroke="#183512" stroke-width="1"/><line x1="488.88" x2="488.88" y1="548.63" y2="588.79" stroke="#3a3a3a" stroke-width="1"/><rect x="486.98" y="557.93" width="3.8" height="28.75" fill="#95f95c" stroke="#183512" stroke-width="1"/><rect x="485.18" y="567.65" width="7.4" height="13.11" fill="#95f95c" stroke="#183512" stroke-width="1"/><line x1="485.18" x2="492.58" y1="572.72" y2="572.72" stroke="#183512" stroke-width="1"/><line x1="507.94" x2="507.94" y1="550.74" y2="595.13" stroke="#3a3a3a" stroke-width="1"/><rect x="506.04" y="558.77" width="3.8" height="27.90" fill="#95f95c" stroke="#183512" stroke-width="1"/><rect x="504.24" y="567.65" width="7.4" height="13.11" fill="#95f95c" stroke="#183512" stroke-width="1"/><line x1="504.24" x2="511.64" y1="574.84" y2="574.84" stroke="#183512" stroke-width="1"/><line x1="527.00" x2="527.00" y1="544.40" y2="577.37" stroke="#3a3a3a" stroke-width="1"/><rect x="525.10" y="547.36" width="3.8" height="22.83" fill="#95f95c" stroke="#183512" stroke-width="1"/><rect x="523.30" y="555.39" width="7.4" height="9.30" fill="#95f95c" stroke="#183512" stroke-width="1"/><line x1="523.30" x2="530.70" y1="560.04" y2="560.04" stroke="#183512" stroke-width="1"/><line x1="546.06" x2="546.06" y1="531.29" y2="567.65" stroke="#3a3a3a" stroke-width="1"/><rect x="544.16" y="536.37" width="3.8" height="21.14" fill="#95f95c" stroke="#183512" stroke-width="1"/><rect x="542.36" y="539.33" width="7.4" height="13.95" fill="#95f95c" stroke="#183512" stroke-width="1"/><line x1="542.36" x2="549.76" y1="547.78" y2="547.78" stroke="#183512" stroke-width="1"/><line x1="565.12" x2="565.12" y1="538.90" y2="577.80" stroke="#3a3a3a" stroke-width="1"/><rect x="563.22" y="545.67" width="3.8" height="21.98" fill="#95f95c" stroke="#183512" stroke-width="1"/><rect x="561.42" y="552.01" width="7.4" height="11.41" fill="#95f95c" stroke="#183512" stroke-width="1"/><line x1="561.42" x2="568.82" y1="556.66" y2="556.66" stroke="#183512" stroke-width="1"/><line x1="584.18" x2="584.18" y1="553.28" y2="584.98" stroke="#3a3a3a" stroke-width="1"/><rect x="582.28" y="554.55" width="3.8" height="16.49" fill="#95f95c" stroke="#183512" stroke-width="1"/><rect x="580.48" y="559.62" width="7.4" height="9.30" fill="#95f95c" stroke="#183512" stroke-width="1"/><line x1="580.48" x2="587.88" y1="563.00" y2="563.00" stroke="#183512" stroke-width="1"/><line x1="603.24" x2="603.24" y1="541.44" y2="570.61" stroke="#3a3a3a" stroke-width="1"/><rect x="601.34" y="544.82" width="3.8" height="15.64" fill="#95f95c" stroke="#183512" stroke-width="1"/><rect x="599.54" y="548.63" width="7.4" height="6.76" fill="#95f95c" stroke="#183512" stroke-width="1"/><line x1="599.54" x2="606.94" y1="552.43" y2="552.43" stroke="#183512" stroke-width="1"/><line x1="622.30" x2="622.30" y1="532.56" y2="565.54" stroke="#3a3a3a" stroke-width="1"/><rect x="620.40" y="538.06" width="3.8" height="13.95" fill="#95f95c" stroke="#183512" stroke-width="1"/><rect x="618.60" y="539.33" width="7.4" height="7.61" fill="#95f95c" stroke="#183512" stroke-width="1"/><line x1="618.60" x2="626.00" y1="543.55" y2="543.55" stroke="#183512" stroke-width="1"/><line x1="641.36" x2="641.36" y1="547.36" y2="576.95" stroke="#3a3a3a" stroke-width="1"/><rect x="639.46" y="550.74" width="3.8" height="13.95" fill="#95f95c" stroke="#183512" stroke-width="1"/><rect x="637.66" y="553.70" width="7.4" height="6.34" fill="#95f95c" stroke="#183512" stroke-width="1"/><line x1="637.66" x2="645.06" y1="556.66" y2="556.66" stroke="#183512" stroke-width="1"/><line x1="660.42" x2="660.42" y1="548.63" y2="583.72" stroke="#3a3a3a" stroke-width="1"/><rect x="658.52" y="555.81" width="3.8" height="16.91" fill="#95f95c" stroke="#183512" stroke-width="1"/><rect x="656.72" y="559.62" width="7.4" height="8.46" fill="#95f95c" stroke="#183512" stroke-width="1"/><line x1="656.72" x2="664.12" y1="563.00" y2="563.00" stroke="#183512" stroke-width="1"/><line x1="679.48" x2="679.48" y1="535.52" y2="564.69" stroke="#3a3a3a" stroke-width="1"/><rect x="677.58" y="545.25" width="3.8" height="16.91" fill="#95f95c" stroke="#183512" stroke-width="1"/><rect x="675.78" y="547.78" width="7.4" height="8.88" fill="#95f95c" stroke="#183512" stroke-width="1"/><line x1="675.78" x2="683.18" y1="552.43" y2="552.43" stroke="#183512" stroke-width="1"/><line x1="698.54" x2="698.54" y1="532.56" y2="563.85" stroke="#3a3a3a" stroke-width="1"/><rect x="696.64" y="535.95" width="3.8" height="17.76" fill="#95f95c" stroke="#183512" stroke-width="1"/><rect x="694.84" y="539.33" width="7.4" height="9.30" fill="#95f95c" stroke="#183512" stroke-width="1"/><line x1="694.84" x2="702.24" y1="544.40" y2="544.40" stroke="#183512" stroke-width="1"/><line x1="717.60" x2="717.60" y1="546.51" y2="573.99" stroke="#3a3a3a" stroke-width="1"/><rect x="715.70" y="548.63" width="3.8" height="18.18" fill="#95f95c" stroke="#183512" stroke-width="1"/><rect x="713.90" y="553.28" width="7.4" height="8.45" fill="#95f95c" stroke="#183512" stroke-width="1"/><line x1="713.90" x2="721.30" y1="556.66" y2="556.66" stroke="#183512" stroke-width="1"/><line x1="736.66" x2="736.66" y1="554.97" y2="584.14" stroke="#3a3a3a" stroke-width="1"/><rect x="734.76" y="556.66" width="3.8" height="15.64" fill="#95f95c" stroke="#183512" stroke-width="1"/><rect x="732.96" y="560.04" width="7.4" height="8.88" fill="#95f95c" stroke="#183512" stroke-width="1"/><line x1="732.96" x2="740.36" y1="564.69" y2="564.69" stroke="#183512" stroke-width="1"/><line x1="755.72" x2="755.72" y1="541.44" y2="571.03" stroke="#3a3a3a" stroke-width="1"/><rect x="753.82" y="544.40" width="3.8" height="17.76" fill="#95f95c" stroke="#183512" stroke-width="1"/><rect x="752.02" y="550.74" width="7.4" height="6.76" fill="#95f95c" stroke="#183512" stroke-width="1"/><line x1="752.02" x2="759.42" y1="553.28" y2="553.28" stroke="#183512" stroke-width="1"/><line x1="774.78" x2="774.78" y1="526.64" y2="560.46" stroke="#3a3a3a" stroke-width="1"/><rect x="772.88" y="533.83" width="3.8" height="25.37" fill="#95f95c" stroke="#183512" stroke-width="1"/><rect x="771.08" y="537.64" width="7.4" height="16.91" fill="#95f95c" stroke="#183512" stroke-width="1"/><line x1="771.08" x2="778.48" y1="546.94" y2="546.94" stroke="#183512" stroke-width="1"/><line x1="793.84" x2="793.84" y1="544.40" y2="575.68" stroke="#3a3a3a" stroke-width="1"/><rect x="791.94" y="546.51" width="3.8" height="23.25" fill="#95f95c" stroke="#183512" stroke-width="1"/><rect x="790.14" y="552.86" width="7.4" height="11.84" fill="#95f95c" stroke="#183512" stroke-width="1"/><line x1="790.14" x2="797.54" y1="560.46" y2="560.46" stroke="#183512" stroke-width="1"/><line x1="812.90" x2="812.90" y1="550.74" y2="582.87" stroke="#3a3a3a" stroke-width="1"/><rect x="811.00" y="553.70" width="3.8" height="24.10" fill="#95f95c" stroke="#183512" stroke-width="1"/><rect x="809.20" y="560.46" width="7.4" height="12.26" fill="#95f95c" stroke="#183512" stroke-width="1"/><line x1="809.20" x2="816.60" y1="566.81" y2="566.81" stroke="#183512" stroke-width="1"/></g>
<polyline points="50.50,570.19 69.56,554.97 88.62,559.20 107.68,575.68 126.74,579.91 145.80,566.81 164.86,563.42 183.92,581.60 202.98,589.63 222.04,577.80 241.10,568.92 260.16,585.41 279.22,598.51 298.28,582.87 317.34,576.95 336.40,592.59 355.46,613.73 374.52,588.79 393.58,588.79 412.64,605.70 431.70,622.19 450.76,593.44 469.82,562.58 488.88,565.11 507.94,568.92 527.00,555.81 546.06,537.21 565.12,551.59 584.18,558.77 603.24,549.47 622.30,538.48 641.36,557.93 660.42,558.77 679.48,551.59 698.54,537.21 717.60,549.47 736.66,563.00 755.72,553.28 774.78,546.94 793.84,557.93 812.90,566.81" fill="none" stroke="#d82228" stroke-width="1.35" stroke-linejoin="round"/>
<polyline points="50.50,570.19 69.56,554.97 88.62,558.77 107.68,573.57 126.74,579.07 145.80,566.38 164.86,563.00 183.92,579.49 202.98,587.10 222.04,577.80 241.10,569.34 260.16,586.67 279.22,599.78 298.28,585.83 317.34,578.22 336.40,595.13 355.46,612.46 374.52,588.79 393.58,588.79 412.64,604.01 431.70,613.73 450.76,592.59 469.82,571.03 488.88,572.30 507.94,573.57 527.00,560.04 546.06,547.78 565.12,556.66 584.18,563.00 603.24,552.43 622.30,544.82 641.36,556.66 660.42,562.58 679.48,553.28 698.54,544.82 717.60,556.66 736.66,563.85 755.72,552.43 774.78,546.94 793.84,559.62 812.90,566.81" fill="none" stroke="#1818ac" stroke-width="1.4" stroke-linejoin="round"/>
<rect x="41.0" y="521.4" width="781.30" height="115.50" fill="none" stroke="#000" stroke-width="1.35"/>
<g stroke="#000" stroke-width="1.1"><line x1="36.0" x2="41.0" y1="620.50" y2="620.50"/><line x1="36.0" x2="41.0" y1="578.22" y2="578.22"/><line x1="36.0" x2="41.0" y1="535.95" y2="535.95"/><line x1="50.50" x2="50.50" y1="636.9" y2="641.6"/><line x1="126.74" x2="126.74" y1="636.9" y2="641.6"/><line x1="202.98" x2="202.98" y1="636.9" y2="641.6"/><line x1="279.22" x2="279.22" y1="636.9" y2="641.6"/><line x1="355.46" x2="355.46" y1="636.9" y2="641.6"/><line x1="431.70" x2="431.70" y1="636.9" y2="641.6"/><line x1="507.94" x2="507.94" y1="636.9" y2="641.6"/><line x1="584.18" x2="584.18" y1="636.9" y2="641.6"/><line x1="660.42" x2="660.42" y1="636.9" y2="641.6"/><line x1="736.66" x2="736.66" y1="636.9" y2="641.6"/><line x1="812.90" x2="812.90" y1="636.9" y2="641.6"/></g>
<g font-family='"Liberation Sans", sans-serif' fill="#000"><text x="31.30" y="625.10" font-size="10.92" text-anchor="end" textLength="13.11" lengthAdjust="spacingAndGlyphs">26</text><text x="31.30" y="582.82" font-size="10.92" text-anchor="end" textLength="13.11" lengthAdjust="spacingAndGlyphs">27</text><text x="31.30" y="540.55" font-size="10.92" text-anchor="end" textLength="13.11" lengthAdjust="spacingAndGlyphs">28</text></g>
<text x="41.60" y="517.05" font-size="12.83" text-anchor="start" textLength="126.27" lengthAdjust="spacingAndGlyphs" font-family='"Liberation Sans", sans-serif' fill="#000">2m temperature (°C)</text>
<g font-family='"Liberation Sans", sans-serif' fill="#000"><text x="50.50" y="654.30" font-size="10.92" text-anchor="middle" textLength="20.16" lengthAdjust="spacingAndGlyphs">00Z</text><text x="50.50" y="666.20" font-size="10.92" text-anchor="middle" textLength="30.93" lengthAdjust="spacingAndGlyphs">05Apr</text><text x="126.74" y="654.30" font-size="10.92" text-anchor="middle" textLength="20.16" lengthAdjust="spacingAndGlyphs">00Z</text><text x="126.74" y="666.20" font-size="10.92" text-anchor="middle" textLength="30.93" lengthAdjust="spacingAndGlyphs">06Apr</text><text x="202.98" y="654.30" font-size="10.92" text-anchor="middle" textLength="20.16" lengthAdjust="spacingAndGlyphs">00Z</text><text x="202.98" y="666.20" font-size="10.92" text-anchor="middle" textLength="30.93" lengthAdjust="spacingAndGlyphs">07Apr</text><text x="279.22" y="654.30" font-size="10.92" text-anchor="middle" textLength="20.16" lengthAdjust="spacingAndGlyphs">00Z</text><text x="279.22" y="666.20" font-size="10.92" text-anchor="middle" textLength="30.93" lengthAdjust="spacingAndGlyphs">08Apr</text><text x="355.46" y="654.30" font-size="10.92" text-anchor="middle" textLength="20.16" lengthAdjust="spacingAndGlyphs">00Z</text><text x="355.46" y="666.20" font-size="10.92" text-anchor="middle" textLength="30.93" lengthAdjust="spacingAndGlyphs">09Apr</text><text x="431.70" y="654.30" font-size="10.92" text-anchor="middle" textLength="20.16" lengthAdjust="spacingAndGlyphs">00Z</text><text x="431.70" y="666.20" font-size="10.92" text-anchor="middle" textLength="30.93" lengthAdjust="spacingAndGlyphs">10Apr</text><text x="507.94" y="654.30" font-size="10.92" text-anchor="middle" textLength="20.16" lengthAdjust="spacingAndGlyphs">00Z</text><text x="507.94" y="666.20" font-size="10.92" text-anchor="middle" textLength="30.93" lengthAdjust="spacingAndGlyphs">11Apr</text><text x="584.18" y="654.30" font-size="10.92" text-anchor="middle" textLength="20.16" lengthAdjust="spacingAndGlyphs">00Z</text><text x="584.18" y="666.20" font-size="10.92" text-anchor="middle" textLength="30.93" lengthAdjust="spacingAndGlyphs">12Apr</text><text x="660.42" y="654.30" font-size="10.92" text-anchor="middle" textLength="20.16" lengthAdjust="spacingAndGlyphs">00Z</text><text x="660.42" y="666.20" font-size="10.92" text-anchor="middle" textLength="30.93" lengthAdjust="spacingAndGlyphs">13Apr</text><text x="736.66" y="654.30" font-size="10.92" text-anchor="middle" textLength="20.16" lengthAdjust="spacingAndGlyphs">00Z</text><text x="736.66" y="666.20" font-size="10.92" text-anchor="middle" textLength="30.93" lengthAdjust="spacingAndGlyphs">14Apr</text><text x="812.90" y="654.30" font-size="10.92" text-anchor="middle" textLength="20.16" lengthAdjust="spacingAndGlyphs">00Z</text><text x="812.90" y="666.20" font-size="10.92" text-anchor="middle" textLength="30.93" lengthAdjust="spacingAndGlyphs">15Apr</text></g>
<line x1="547.2" x2="547.2" y1="15.7" y2="84.3" stroke="#3a3a3a" stroke-width="1"/>
<rect x="542.8" y="27.6" width="8.6" height="45.7" fill="#95f95c" stroke="#183512" stroke-width="1"/>
<rect x="538.5" y="38.6" width="17.4" height="22.8" fill="#95f95c" stroke="#183512" stroke-width="1"/>
<line x1="538.5" x2="555.9" y1="50.4" y2="50.4" stroke="#183512" stroke-width="1"/>
<g font-family='"Liberation Sans", sans-serif' fill="#000"><text x="565.20" y="18.30" font-size="9.50" text-anchor="start" textLength="19.52" lengthAdjust="spacingAndGlyphs">max</text><text x="565.20" y="29.75" font-size="9.50" text-anchor="start" textLength="19.92" lengthAdjust="spacingAndGlyphs">90%</text><text x="565.20" y="41.20" font-size="9.50" text-anchor="start" textLength="19.92" lengthAdjust="spacingAndGlyphs">75%</text><text x="565.20" y="52.65" font-size="9.50" text-anchor="start" textLength="33.59" lengthAdjust="spacingAndGlyphs">median</text><text x="565.20" y="64.10" font-size="9.50" text-anchor="start" textLength="19.92" lengthAdjust="spacingAndGlyphs">25%</text><text x="565.20" y="75.55" font-size="9.50" text-anchor="start" textLength="19.92" lengthAdjust="spacingAndGlyphs">10%</text><text x="565.20" y="87.00" font-size="9.50" text-anchor="start" textLength="16.90" lengthAdjust="spacingAndGlyphs">min</text></g>
<line x1="678.2" x2="703.9" y1="38.2" y2="38.2" stroke="#d82228" stroke-width="1.35"/>
<line x1="678.2" x2="703.9" y1="62.9" y2="62.9" stroke="#1818ac" stroke-width="1.35"/>
<g font-family='"Liberation Sans", sans-serif' fill="#000"><text x="713.40" y="42.50" font-size="12.88" text-anchor="start" textLength="43.92" lengthAdjust="spacingAndGlyphs">Control</text><text x="713.40" y="67.10" font-size="12.88" text-anchor="start" textLength="96.55" lengthAdjust="spacingAndGlyphs">Ensemble Mean</text></g>
</svg></body></html>
